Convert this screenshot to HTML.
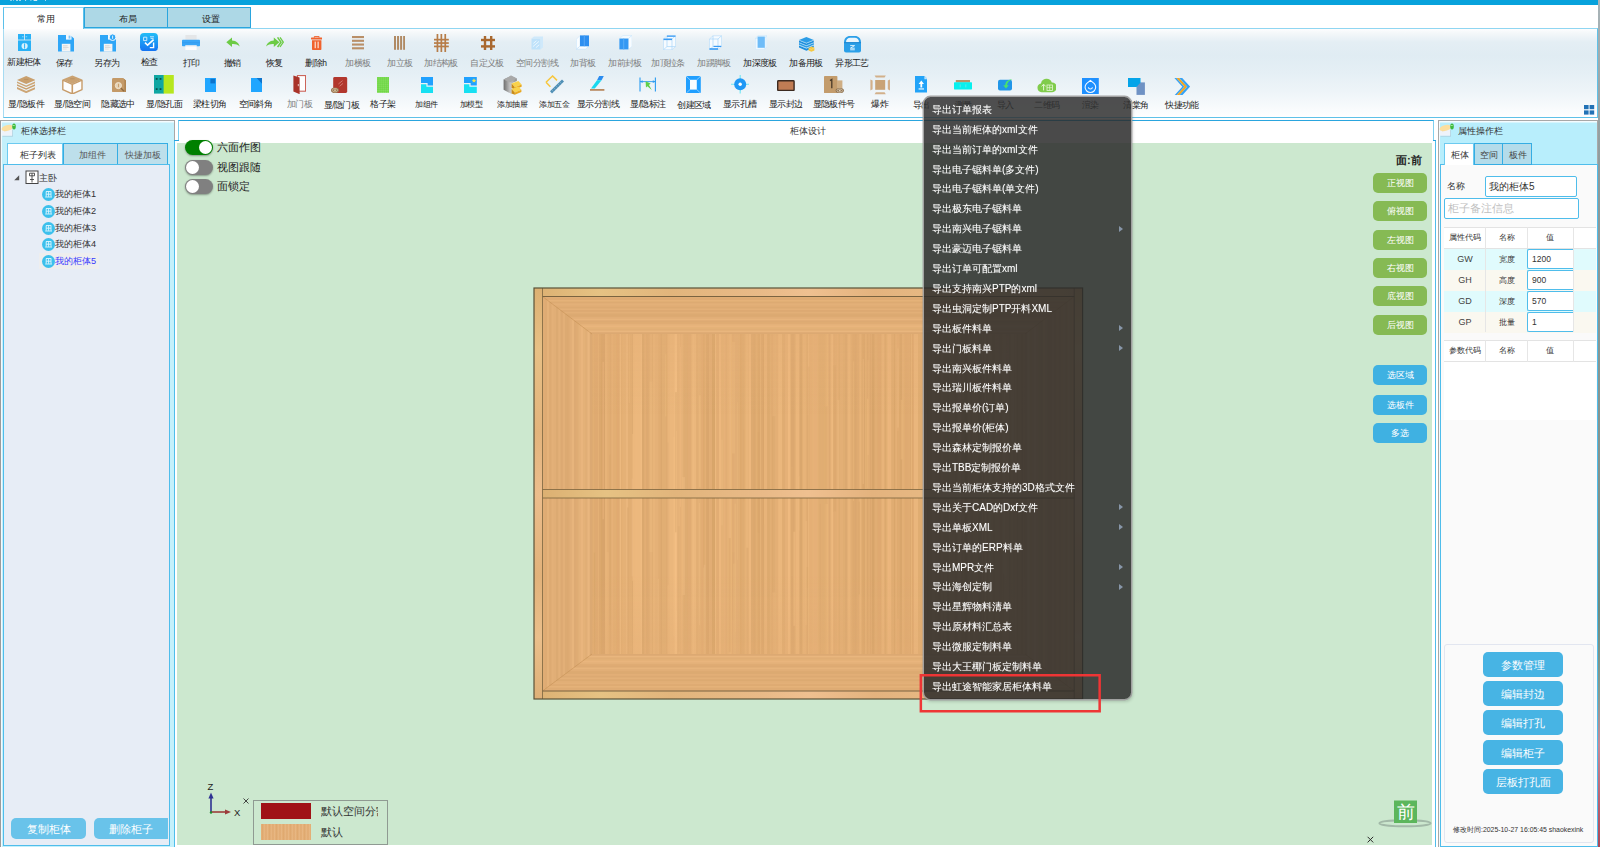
<!DOCTYPE html>
<html lang="zh">
<head>
<meta charset="utf-8">
<title>柜体设计</title>
<style>
*{box-sizing:border-box;margin:0;padding:0}
html,body{width:1600px;height:847px;overflow:hidden;background:#fff}
body{font-family:"Liberation Sans",sans-serif;font-size:9px;color:#222;position:relative}
.abs{position:absolute}
#titlebar{left:0;top:0;width:1600px;height:4.8px;background:#08a2dc}
#rightedge{left:1598.4px;top:0;width:1.6px;height:847px;background:linear-gradient(to bottom,#a9b4b8 0%,#8f9b9c 20%,#84948f 55%,#6f8b80 72%,#8a9a90 82%,#c58a98 88%,#b86070 95%,#a84858 100%)}
/* top tabs */
.ttab{position:absolute;top:7px;height:21px;text-align:center;line-height:22px;font-size:9px;color:#222}
.ttab.on{background:#fff;border:1px solid #8fd3f0;border-left-color:#5bc0ea;border-right-color:#5bc0ea;border-bottom:none;height:22.2px;z-index:3;padding-left:4px}
.ttab.off{background:#add8e6;border:1px solid #2aa5de;padding-left:3px}
#ribbon{left:3px;top:27.6px;width:1594.6px;height:90.2px;border:1px solid #5fc1e8;border-top-color:#8fd6f2;border-left-color:#a6dbf2;
 background:linear-gradient(to bottom,#fdfdfe 0%,#f5f8fa 4%,#e4eef4 15%,#e0ecf3 30%,#e5eff5 50%,#edf4f8 70%,#f7fafc 88%,#ffffff 100%)}
.tb{position:absolute;width:60px;text-align:center;font-size:8.5px;line-height:10px;color:#222;white-space:nowrap;letter-spacing:-0.55px}
.tb.g{color:#7d7d7d}
.tb.s{font-size:7.6px;letter-spacing:-0.5px;margin-top:1px}
.ic{position:absolute;width:24px;height:24px}
/* panels */

/* left panel */
#leftp{left:0;top:119.5px;width:174.5px;height:728px;background:#c4f0fb;border:1px solid #a8a8a8;border-left:1.5px solid #9c9c9c;border-bottom:none;box-shadow:inset 1px 1.5px 0 #f4fbfe}
#lp-title{left:21px;top:125px;font-size:9.2px;line-height:12px;color:#333}
.ltab{position:absolute;top:143px;height:22px;font-size:9px;line-height:22.5px;text-align:center;color:#444;white-space:nowrap}
.ltab.on{background:#fff;border:1px solid #6ccaf0;border-bottom:none;color:#333}
.ltab.off{background:#bddfeb;border:1px solid #35ade3;color:#555}
#lp-body{left:3px;top:164px;width:167px;height:682px;background:#e7edf6;border:1px solid #4fbdeb}
.tri{position:absolute;font-size:9px;line-height:12px;color:#333}
.tritem{position:absolute;left:55px;font-size:9.2px;line-height:12px;color:#333;white-space:nowrap}
.tcirc{position:absolute;left:41.5px;width:13px;height:13px;border-radius:50%;background:#3cc0ec}
.lbtn{position:absolute;top:818px;height:21px;background:#69c3ea;color:#fff;font-size:11px;line-height:22px;text-align:center;border-radius:5px}

/* center */
#centerp{left:178px;top:120px;width:1256px;height:21px;background:#fff;border:1px solid #2aa5de;border-left-color:#7fd0f0;border-right-color:#7fd0f0;border-bottom:none}
#centerp2{left:174px;top:140px;width:1262px;height:707px;background:#fff;border-left:1px solid #4fbdeb;border-right:1px solid #4fbdeb}
#cstep{left:174px;top:140px;width:5px;height:1px;background:#2aa5de}
#cstep2{left:1433px;top:140px;width:3px;height:1px;background:#2aa5de}
#ctitle{left:178px;top:125px;width:1260px;text-align:center;font-size:9px;line-height:12px;color:#333}
#canvas{left:177px;top:143px;width:1255px;height:702px;background:#cce8cf}
.tg{position:absolute;left:185px;width:28px;height:15px;border-radius:8px;box-shadow:0 1px 2px rgba(0,0,0,.35)}
.tg i{position:absolute;top:1px;width:13px;height:13px;border-radius:50%;background:#fff}
.tgl{position:absolute;left:217px;font-size:10.8px;line-height:14px;color:#222;white-space:nowrap}
.vb{position:absolute;left:1373px;width:54px;height:20px;border-radius:5px;color:#fff;font-size:8.5px;line-height:21px;text-align:center}
.vb.g{background:#86ba54}
.vb.b{background:#3fb1e2}
/* right panel */
#rightp{left:1438px;top:119.5px;width:159.5px;height:728px;background:#b8eefc;border:1px solid #a8a8a8;border-bottom:none;box-shadow:inset 1px 1.5px 0 #f4fbfe}
#rp-body{left:1440px;top:164px;width:157.5px;height:683px;background:#fafafa;border:1px solid #4fbdeb;border-bottom-width:1.5px}
#rp-title{left:1458px;top:125px;font-size:9.2px;line-height:12px;color:#333}
.rtab{position:absolute;top:143px;height:22px;width:29px;font-size:9px;line-height:22px;padding-left:1.5px;text-align:center;white-space:nowrap}
.rtab.on{background:#fff;border:1px solid #6ccaf0;border-bottom:none;color:#333}
.rtab.off{background:#b4dcea;border:1px solid #35ade3;color:#444}
.inp{position:absolute;background:#fff;border:1px solid #4fbdeb;border-radius:2px;font-size:10px;color:#333;white-space:nowrap;overflow:hidden}
.cell{position:absolute;font-size:8px;line-height:21px;text-align:center;color:#333;white-space:nowrap;height:21px}
.rbtn{position:absolute;left:1483px;width:80px;height:25px;border-radius:5px;background:#47b4e4;color:#fff;font-size:11px;line-height:26px;text-align:center}

/* menu */
#menu{left:924px;top:96.8px;width:206.6px;height:602.6px;border-radius:6.5px;background:rgba(42,42,42,.85);box-shadow:0 0 0 1.4px rgba(158,158,158,.95),1px 2px 3px 1px rgba(0,0,0,.15)}
#menu .hl{position:absolute;left:0;top:0;width:206.6px;height:22px;border-radius:6px 6px 0 0;background:rgba(255,255,255,.03)}
.mi{position:absolute;left:932px;height:20px;line-height:20px;font-size:10px;color:#fff;white-space:nowrap;text-shadow:0 0 1px rgba(255,255,255,.35)}
.ma{position:absolute;left:1119px;width:0;height:0;border-left:4px solid #8796a8;border-top:3.5px solid transparent;border-bottom:3.5px solid transparent}
#redbox{left:919.5px;top:674px;width:181.5px;height:38.5px;border:2.5px solid #ee3434}
</style>
</head>
<body>
<div id="titlebar" class="abs"></div>
<svg class="abs" style="left:8px;top:0" width="44" height="2" viewBox="0 0 44 2"><path d="M2.4 0h1.2v.9H2.4zM5 0h.7v.7H5zM8 0h2v.8H8zM11 0h2v.8h-2zM17.2 0h.9v1h-.9zM22.4 0h1v.8h-1zM25.6 0h3.6v.9h-3.6zM37 0h.8v1h-.8z" fill="#fff" opacity=".8"/></svg>
<div class="ttab on" style="left:3px;width:81px">常用</div>
<div class="ttab off" style="left:84px;width:84px">布局</div>
<div class="ttab off" style="left:167px;width:84px">设置</div>
<div id="ribbon" class="abs"></div>
<!--RIBSTART-->
<svg class="abs" style="left:17.5px;top:33.5px" width="13.2" height="17.8" viewBox="0 0 13.2 17.8"><rect x="0" y="0" width="6.2" height="5.6" fill="#29b1f6"/><rect x="7" y="0" width="6.2" height="5.6" fill="#29b1f6"/><rect x="0" y="6.4" width="13.2" height="11.4" fill="#29b1f6"/><circle cx="6.6" cy="12" r="3.1" fill="#d8f1fd"/><rect x="6.1" y="9.4" width="1" height="5.2" fill="#29b1f6"/><rect x="4" y="2.4" width="1.6" height="0.8" fill="#9edcfb"/><rect x="7.6" y="2.4" width="1.6" height="0.8" fill="#9edcfb"/></svg>
<div class="tb" style="left:-6px;top:57px">新建柜体</div>
<svg class="abs" style="left:58px;top:35px" width="16" height="16.6" viewBox="0 0 16 16.6"><path d="M0 0H12.2L16 3.6V16.6H0z" fill="#2ea6f7"/><rect x="8" y="0" width="5.5" height="4.6" fill="#f2f8fd"/><rect x="10.6" y="0.6" width="1.8" height="3" fill="#7cc6fa"/><rect x="3.8" y="8.8" width="8.6" height="7.8" fill="#f4f4f4"/><rect x="5" y="10.4" width="4.6" height="0.9" fill="#cfcfcf"/><rect x="5" y="12" width="5.6" height="0.9" fill="#d8d8d8"/><rect x="5" y="13.6" width="3.6" height="0.9" fill="#dedede"/></svg>
<div class="tb" style="left:34px;top:57.5px">保存</div>
<svg class="abs" style="left:100px;top:33px" width="16" height="18.6" viewBox="0 -2 16 18.6"><path d="M0 0H12.2L16 3.6V16.6H0z" fill="#2ea6f7"/><rect x="8" y="0" width="5.5" height="4.6" fill="#f2f8fd"/><rect x="10.6" y="0.6" width="1.8" height="3" fill="#7cc6fa"/><rect x="3.8" y="8.8" width="8.6" height="7.8" fill="#f4f4f4"/><rect x="5" y="10.4" width="4.6" height="0.9" fill="#cfcfcf"/><rect x="5" y="12" width="5.6" height="0.9" fill="#d8d8d8"/><rect x="5" y="13.6" width="3.6" height="0.9" fill="#dedede"/><circle cx="12.6" cy="2.2" r="3.3" fill="#2ea6f7" stroke="#f2f8fd" stroke-width="1"/><rect x="12.2" y="0.6" width="0.9" height="3.2" fill="#f2f8fd"/></svg>
<div class="tb" style="left:77px;top:57.5px">另存为</div>
<svg class="abs" style="left:140.3px;top:33.3px" width="18" height="18.2" viewBox="0 0 18 18.2"><defs><linearGradient id="gck" x1="0" y1="0" x2="0" y2="1"><stop offset="0" stop-color="#22bdf7"/><stop offset="1" stop-color="#1473f2"/></linearGradient></defs><rect x="0" y="0" width="18" height="18.2" rx="4" fill="url(#gck)"/><path d="M3.6 4.2h3.2v3.4H3.6z M10 3.8h4 M10.6 5.4h3" stroke="#d6efff" stroke-width=".9" fill="none"/><path d="M5 9.6l2.6 2.6 6-5.6" stroke="#fff" stroke-width="1.6" fill="none"/><path d="M13.6 9.6v5H9.8" stroke="#fff" stroke-width="1.4" fill="none"/></svg>
<div class="tb" style="left:119px;top:56.5px">检查</div>
<svg class="abs" style="left:182.3px;top:35px" width="18" height="15.4" viewBox="0 0 18 15.4"><rect x="3.4" y="0" width="11.2" height="5" fill="#e4e6e8"/><rect x="0" y="4.8" width="18" height="6.4" rx="0.8" fill="#3aa6f7"/><rect x="0" y="7.2" width="18" height="1" fill="#2a8de0" opacity=".35"/><rect x="3.4" y="10.4" width="11.2" height="5" fill="#fdfdfd"/><rect x="3.4" y="10.4" width="11.2" height="1" fill="#dfe6ee"/></svg>
<div class="tb" style="left:161px;top:57.5px">打印</div>
<svg class="abs" style="left:225.5px;top:37px" width="14" height="11" viewBox="0 0 14 11"><path d="M0.3 5.2L6 0.4V3.4C10.6 3.6 13 6.2 13.6 9.4C11.6 7.4 9.4 6.8 6 7V10z" fill="#6ccb45"/></svg>
<div class="tb" style="left:202px;top:57.5px">撤销</div>
<svg class="abs" style="left:266.3px;top:37px" width="17.6" height="11" viewBox="0 0 17.6 11"><path d="M13.4 5.2L7.8 0.4V3.4C3.6 3.6 0.8 6.2 0.2 9.4C2.2 7.4 4.6 6.8 7.8 7V10z" fill="#6ccb45"/><path d="M11.6 0.4L15 5.2L11.6 10" stroke="#6ccb45" stroke-width="1.5" fill="none"/><path d="M14 0.4L17.3 5.2L14 10" stroke="#6ccb45" stroke-width="1.3" fill="none"/></svg>
<div class="tb" style="left:244px;top:57.5px">恢复</div>
<svg class="abs" style="left:310.5px;top:36px" width="11.4" height="14" viewBox="0 0 11.4 14"><path d="M3.4 1.6V0.4H8V1.6" stroke="#f0622d" stroke-width="1" fill="none"/><rect x="0" y="1.6" width="11.4" height="1.8" rx=".6" fill="#f0622d"/><path d="M1 4.2H10.4V13.2a.8.8 0 0 1-.8.8H1.8a.8.8 0 0 1-.8-.8z" fill="#f0622d"/><rect x="3.6" y="5.6" width="1.3" height="6.6" fill="#fbd7c8"/><rect x="6.5" y="5.6" width="1.3" height="6.6" fill="#fbd7c8"/></svg>
<div class="tb" style="left:286px;top:57.5px">删除h</div>
<svg class="abs" style="left:352px;top:36.2px" width="12" height="13.4" viewBox="0 0 12 13.4"><rect x="0" y="0" width="12" height="2.1" fill="#b98f68"/><rect x="0" y="3.75" width="12" height="2.1" fill="#b98f68"/><rect x="0" y="7.5" width="12" height="2.1" fill="#b98f68"/><rect x="0" y="11.25" width="12" height="2.1" fill="#b98f68"/></svg>
<div class="tb g" style="left:328px;top:57.5px">加横板</div>
<svg class="abs" style="left:394px;top:35.8px" width="11.2" height="13.8" viewBox="0 0 11.2 13.8"><rect x="0" y="0" width="2" height="13.8" fill="#b08a64"/><rect x="3.05" y="0" width="2" height="13.8" fill="#b08a64"/><rect x="6.1" y="0" width="2" height="13.8" fill="#b08a64"/><rect x="9.15" y="0" width="2" height="13.8" fill="#b08a64"/></svg>
<div class="tb g" style="left:370px;top:57.5px">加立板</div>
<svg class="abs" style="left:434.3px;top:34px" width="14.8" height="18" viewBox="0 0 14.8 18"><rect x="2.6" y="0" width="1.7" height="18" fill="#b77d49"/><rect x="6.5" y="0" width="1.7" height="18" fill="#b77d49"/><rect x="10.4" y="0" width="1.7" height="18" fill="#b77d49"/><rect x="0" y="4.8" width="14.8" height="1.7" fill="#b77d49"/><rect x="0" y="8.2" width="14.8" height="1.7" fill="#b77d49"/><rect x="0" y="11.6" width="14.8" height="1.7" fill="#b77d49"/></svg>
<div class="tb g" style="left:411px;top:57.5px">加结构板</div>
<svg class="abs" style="left:480.6px;top:36px" width="14.2" height="14.4" viewBox="0 0 14.2 14.4"><rect x="2.8" y="0" width="2.4" height="14.4" fill="#a9682f"/><rect x="9" y="0" width="2.4" height="14.4" fill="#a9682f"/><rect x="0" y="2.8" width="14.2" height="2.4" fill="#a9682f"/><rect x="0" y="9.2" width="14.2" height="2.4" fill="#a9682f"/></svg>
<div class="tb g" style="left:457px;top:57.5px">自定义板</div>
<svg class="abs" style="left:531.4px;top:35.6px" width="12.4" height="14" viewBox="0 0 12.4 14"><path d="M0.5 2.6L3 0.5H12L9.4 2.6z M9.4 2.6L12 0.5V11.4L9.4 13.5z" fill="#cfe9fb"/><rect x="0.5" y="2.6" width="8.9" height="10.9" fill="#bfe2fa"/><path d="M2 10.6L8 5.4M2.4 7.4L5.4 4.8M5 11.6L8.2 8.8" stroke="#eaf6fe" stroke-width="1"/></svg>
<div class="tb g" style="left:507px;top:57.5px">空间分割线</div>
<svg class="abs" style="left:576.4px;top:35.2px" width="13.4" height="14.8" viewBox="0 0 13.4 14.8"><path d="M0.5 4.2L4 0.6V11.2L0.5 14.2z" fill="#fafdff" stroke="#cfe7fb" stroke-width=".6"/><path d="M0.5 14.2L4 11.2H13L9.4 14.2z" fill="#fafdff" stroke="#bfe0fa" stroke-width=".6"/><rect x="4" y="0.4" width="9" height="10.8" fill="#2e8ff0"/><rect x="7.8" y="0.4" width="1" height="10.8" fill="#56a6f5"/></svg>
<div class="tb g" style="left:553px;top:57.5px">加背板</div>
<svg class="abs" style="left:618.7px;top:35.2px" width="13.4" height="14.8" viewBox="0 0 13.4 14.8"><path d="M0.4 3.6L4 0.5H13L9.4 3.6z" fill="#f4fafe" stroke="#cfe7fb" stroke-width=".6"/><path d="M9.4 3.6L13 0.5V11.4L9.4 14.4z" fill="#f8fcff" stroke="#cfe7fb" stroke-width=".6"/><rect x="0.4" y="3.6" width="9" height="10.8" fill="#3398f3"/><rect x="4.2" y="3.6" width="1" height="10.8" fill="#5aaef7"/></svg>
<div class="tb g" style="left:595px;top:57.5px">加前封板</div>
<svg class="abs" style="left:662.8px;top:34.8px" width="13" height="15.2" viewBox="0 0 13 15.2"><path d="M0.5 4L4 0.8H12.5V11.6L9 14.7H0.5z" fill="#f6fbff" stroke="#bfe0fa" stroke-width=".7"/><path d="M0.5 4H9V14.7M9 4L12.5 0.8M4 0.8V11.6H12.5M4 11.6L0.5 14.7" stroke="#a8d6f9" stroke-width=".7" fill="none"/><rect x="0.5" y="3.6" width="8.5" height="1.5" fill="#3a9cf4"/><rect x="4" y="0.5" width="8.5" height="1.3" fill="#3a9cf4"/></svg>
<div class="tb g" style="left:638px;top:57.5px">加顶拉条</div>
<svg class="abs" style="left:708.8px;top:34.8px" width="13" height="15.2" viewBox="0 0 13 15.2"><path d="M0.5 4L4 0.8H12.5V11.6L9 14.7H0.5z" fill="#f6fbff" stroke="#bfe0fa" stroke-width=".7"/><path d="M0.5 4H9V14.7M9 4L12.5 0.8M4 0.8V11.6H12.5M4 11.6L0.5 14.7" stroke="#a8d6f9" stroke-width=".7" fill="none"/><rect x="0.5" y="13.2" width="8.5" height="1.6" fill="#3a9cf4"/><rect x="4.6" y="10.8" width="7.6" height="1.2" fill="#3a9cf4"/></svg>
<div class="tb g" style="left:684px;top:57.5px">加踢脚板</div>
<svg class="abs" style="left:754.8px;top:35px" width="12.6" height="15" viewBox="0 0 12.6 15"><path d="M0.5 3.4L3 0.6H12L9.6 3.4z M9.6 3.4L12 0.6V11.8L9.6 14.5z" fill="#e6f4fe" stroke="#cde7fb" stroke-width=".5"/><rect x="0.5" y="3.4" width="9.1" height="11.1" fill="#eef8ff" stroke="#cde7fb" stroke-width=".5"/><rect x="2.6" y="1.6" width="7.2" height="11.2" fill="#6ebcf8"/></svg>
<div class="tb" style="left:730px;top:57.5px">加深度板</div>
<svg class="abs" style="left:799.4px;top:37px" width="15.4" height="14.8" viewBox="0 0 15.4 14.8"><path d="M7.4 0L14.8 3L7.4 6L0 3z" fill="#2b9ce6"/><path d="M0 3.6L7.4 6.6L14.8 3.6V5.4L7.4 8.4L0 5.4z" fill="#1f8fdc"/><path d="M0 6L7.4 9L14.8 6V7.8L7.4 10.8L0 7.8z" fill="#2b9ce6"/><path d="M0 8.4L7.4 11.4L14.8 8.4V10.6L7.4 13.8L0 10.6z" fill="#1f8fdc"/><path d="M1 3.4L7.4 6L13.8 3.4M1 6L7.4 8.6 13.8 6M1 8.6L7.4 11.2 13.8 8.6" stroke="#8fd0f7" stroke-width=".5" fill="none"/><path d="M9.6 11.2L12.6 9.6L15.4 10.8V13.4L12.4 14.8L9.6 13.6z" fill="#f5c842"/><path d="M9.6 11.2L12.4 12.4L15.4 10.8" stroke="#fbe08a" stroke-width=".6" fill="none"/></svg>
<div class="tb" style="left:776px;top:57.5px">加备用板</div>
<svg class="abs" style="left:844.2px;top:36.2px" width="17" height="16.6" viewBox="0 0 17 16.6"><path d="M0 6.5C0 2.2 2.6 0 6 0H11C14.4 0 17 2.2 17 6.5V14.6a2 2 0 0 1-2 2H2a2 2 0 0 1-2-2z" fill="#2b9fe8"/><path d="M2 6.2C2 3.4 3.8 1.8 6.2 1.8H10.8C13.2 1.8 15 3.4 15 6.2z" fill="#e9f5fd"/><rect x="0" y="6.2" width="17" height="1" fill="#1c84cf"/><path d="M6.2 9.6H10.6L6.4 12.2H10.8 M6.2 13.8H10.8" stroke="#d9effc" stroke-width="1" fill="none"/></svg>
<div class="tb" style="left:822px;top:57.5px">异形工艺</div>
<svg class="abs" style="left:17px;top:75.8px" width="18.4" height="17.2" viewBox="0 0 18.4 17.2"><path d="M9.2 0L18.4 4L9.2 8L0 4z" fill="#c9a06e"/><path d="M0 5.4L9.2 9.4L18.4 5.4V7L9.2 11L0 7z" fill="#cda676"/><path d="M0 8.2L9.2 12.2L18.4 8.2V9.8L9.2 13.8L0 9.8z" fill="#c9a06e"/><path d="M0 11L9.2 15L18.4 11V13L9.2 17.2L0 13z" fill="#cda676"/><path d="M7 3.4h4.4" stroke="#b58c5c" stroke-width=".7"/></svg>
<div class="tb" style="left:-3.8px;top:99.3px">显/隐板件</div>
<svg class="abs" style="left:61.8px;top:74.8px" width="20.8" height="19.6" viewBox="0 0 20.8 19.6"><path d="M10.4 0.4L20.2 4.6L10.4 8.8L0.6 4.6z" fill="#caa272"/><path d="M0.8 5.2L10.4 9.4V19L0.8 14.6z" fill="#fdfdfd" stroke="#c79c6a" stroke-width="1.4" stroke-linejoin="round"/><path d="M20 5.2L10.4 9.4V19L20 14.6z" fill="#fdfdfd" stroke="#c79c6a" stroke-width="1.4" stroke-linejoin="round"/><path d="M8.2 3.8h4.4" stroke="#b58c5c" stroke-width=".7"/></svg>
<div class="tb" style="left:42.2px;top:99.3px">显/隐空间</div>
<svg class="abs" style="left:112px;top:77.6px" width="14.2" height="14.4" viewBox="0 0 14.2 14.4"><path d="M1.4 0H11L14.2 2.6V13a1.4 1.4 0 0 1-1.4 1.4H1.4A1.4 1.4 0 0 1 0 13V1.4A1.4 1.4 0 0 1 1.4 0z" fill="#c49a68"/><path d="M11 0L14.2 2.6V13.6L12.4 14.4V2.2z" fill="#b08552"/><circle cx="6.4" cy="7.6" r="3.1" fill="#e6d3b6" stroke="#f2e6d2" stroke-width=".9"/><rect x="6" y="5.8" width=".9" height="3.4" fill="#c49a68"/><path d="M8.8 10L12 13.2" stroke="#8f6a40" stroke-width="1.4"/></svg>
<div class="tb" style="left:88px;top:99.3px">隐藏选中</div>
<svg class="abs" style="left:154.2px;top:75px" width="19.8" height="18.6" viewBox="0 0 19.8 18.6"><rect x="0" y="0" width="10" height="18.6" fill="#0fa6a2"/><rect x="9.6" y="0" width="10.2" height="18.6" fill="#b6e71e"/><rect x="1.8" y="3" width="1.8" height="1.8" fill="#08504e"/><rect x="5.6" y="3" width="1.8" height="1.8" fill="#08504e"/><rect x="1.8" y="13.2" width="1.8" height="1.8" fill="#08504e"/><rect x="5.6" y="13.2" width="1.8" height="1.8" fill="#08504e"/></svg>
<div class="tb" style="left:134.2px;top:98.5px">显/隐孔面</div>
<svg class="abs" style="left:204.6px;top:77.6px" width="11" height="14.4" viewBox="0 0 11 14.4"><rect x="0" y="0" width="11" height="14.4" fill="#20a6ff"/><rect x="5.4" y="0.8" width="4.8" height="4.6" fill="#0d74cc"/></svg>
<div class="tb" style="left:179.8px;top:99.3px">梁柱切角</div>
<svg class="abs" style="left:250.6px;top:77.6px" width="11" height="14.4" viewBox="0 0 11 14.4"><rect x="0" y="0" width="11" height="14.4" fill="#20a6ff"/><path d="M5.6 0H11V5.8z" fill="#0d74cc"/></svg>
<div class="tb" style="left:225.5px;top:99.3px">空间斜角</div>
<svg class="abs" style="left:293px;top:74.8px" width="13.2" height="19.6" viewBox="0 0 13.2 19.6"><rect x="4.4" y="0.6" width="8.2" height="15.6" fill="#fdfdfd" stroke="#c8564a" stroke-width="1"/><path d="M0.4 0.4L6.6 2.6V19.2L0.4 16.4z" fill="#a93329"/><rect x="4.8" y="9" width="1" height="2.2" fill="#e8c8c4"/></svg>
<div class="tb g" style="left:269.5px;top:99.3px">加门板</div>
<svg class="abs" style="left:331.4px;top:76.8px" width="16.4" height="16.6" viewBox="0 0 16.4 16.6"><rect x="2.2" y="0" width="14" height="16" rx="1.4" fill="#b2372d"/><path d="M7.4 7L11.6 3.6M8.6 9.2L12 6.4" stroke="#d98880" stroke-width=".8"/><ellipse cx="4" cy="13.2" rx="4" ry="2.8" fill="#9a7752"/><ellipse cx="4" cy="13.2" rx="2.6" ry="1.7" fill="none" stroke="#d8c4a4" stroke-width=".7"/><circle cx="4" cy="13.2" r=".9" fill="#d8c4a4"/></svg>
<div class="tb" style="left:311.6px;top:99.8px">显/隐门板</div>
<svg class="abs" style="left:377px;top:77px" width="12.4" height="15.8" viewBox="0 0 12.4 15.8"><rect x="0" y="0" width="12.4" height="15.8" fill="#8be066"/><rect x="0.25" y="0.2" width="1.6" height="1.6" fill="#6fd645" transform="rotate(45 1.05 1)"/><rect x="0.25" y="2.15" width="1.6" height="1.6" fill="#6fd645" transform="rotate(45 1.05 2.95)"/><rect x="0.25" y="4.1" width="1.6" height="1.6" fill="#6fd645" transform="rotate(45 1.05 4.9)"/><rect x="0.25" y="6.05" width="1.6" height="1.6" fill="#6fd645" transform="rotate(45 1.05 6.85)"/><rect x="0.25" y="8" width="1.6" height="1.6" fill="#6fd645" transform="rotate(45 1.05 8.8)"/><rect x="0.25" y="9.95" width="1.6" height="1.6" fill="#6fd645" transform="rotate(45 1.05 10.75)"/><rect x="0.25" y="11.9" width="1.6" height="1.6" fill="#6fd645" transform="rotate(45 1.05 12.7)"/><rect x="0.25" y="13.85" width="1.6" height="1.6" fill="#6fd645" transform="rotate(45 1.05 14.65)"/><rect x="2.3" y="0.2" width="1.6" height="1.6" fill="#6fd645" transform="rotate(45 3.1 1)"/><rect x="2.3" y="2.15" width="1.6" height="1.6" fill="#6fd645" transform="rotate(45 3.1 2.95)"/><rect x="2.3" y="4.1" width="1.6" height="1.6" fill="#6fd645" transform="rotate(45 3.1 4.9)"/><rect x="2.3" y="6.05" width="1.6" height="1.6" fill="#6fd645" transform="rotate(45 3.1 6.85)"/><rect x="2.3" y="8" width="1.6" height="1.6" fill="#6fd645" transform="rotate(45 3.1 8.8)"/><rect x="2.3" y="9.95" width="1.6" height="1.6" fill="#6fd645" transform="rotate(45 3.1 10.75)"/><rect x="2.3" y="11.9" width="1.6" height="1.6" fill="#6fd645" transform="rotate(45 3.1 12.7)"/><rect x="2.3" y="13.85" width="1.6" height="1.6" fill="#6fd645" transform="rotate(45 3.1 14.65)"/><rect x="4.35" y="0.2" width="1.6" height="1.6" fill="#6fd645" transform="rotate(45 5.15 1)"/><rect x="4.35" y="2.15" width="1.6" height="1.6" fill="#6fd645" transform="rotate(45 5.15 2.95)"/><rect x="4.35" y="4.1" width="1.6" height="1.6" fill="#6fd645" transform="rotate(45 5.15 4.9)"/><rect x="4.35" y="6.05" width="1.6" height="1.6" fill="#6fd645" transform="rotate(45 5.15 6.85)"/><rect x="4.35" y="8" width="1.6" height="1.6" fill="#6fd645" transform="rotate(45 5.15 8.8)"/><rect x="4.35" y="9.95" width="1.6" height="1.6" fill="#6fd645" transform="rotate(45 5.15 10.75)"/><rect x="4.35" y="11.9" width="1.6" height="1.6" fill="#6fd645" transform="rotate(45 5.15 12.7)"/><rect x="4.35" y="13.85" width="1.6" height="1.6" fill="#6fd645" transform="rotate(45 5.15 14.65)"/><rect x="6.4" y="0.2" width="1.6" height="1.6" fill="#6fd645" transform="rotate(45 7.2 1)"/><rect x="6.4" y="2.15" width="1.6" height="1.6" fill="#6fd645" transform="rotate(45 7.2 2.95)"/><rect x="6.4" y="4.1" width="1.6" height="1.6" fill="#6fd645" transform="rotate(45 7.2 4.9)"/><rect x="6.4" y="6.05" width="1.6" height="1.6" fill="#6fd645" transform="rotate(45 7.2 6.85)"/><rect x="6.4" y="8" width="1.6" height="1.6" fill="#6fd645" transform="rotate(45 7.2 8.8)"/><rect x="6.4" y="9.95" width="1.6" height="1.6" fill="#6fd645" transform="rotate(45 7.2 10.75)"/><rect x="6.4" y="11.9" width="1.6" height="1.6" fill="#6fd645" transform="rotate(45 7.2 12.7)"/><rect x="6.4" y="13.85" width="1.6" height="1.6" fill="#6fd645" transform="rotate(45 7.2 14.65)"/><rect x="8.45" y="0.2" width="1.6" height="1.6" fill="#6fd645" transform="rotate(45 9.25 1)"/><rect x="8.45" y="2.15" width="1.6" height="1.6" fill="#6fd645" transform="rotate(45 9.25 2.95)"/><rect x="8.45" y="4.1" width="1.6" height="1.6" fill="#6fd645" transform="rotate(45 9.25 4.9)"/><rect x="8.45" y="6.05" width="1.6" height="1.6" fill="#6fd645" transform="rotate(45 9.25 6.85)"/><rect x="8.45" y="8" width="1.6" height="1.6" fill="#6fd645" transform="rotate(45 9.25 8.8)"/><rect x="8.45" y="9.95" width="1.6" height="1.6" fill="#6fd645" transform="rotate(45 9.25 10.75)"/><rect x="8.45" y="11.9" width="1.6" height="1.6" fill="#6fd645" transform="rotate(45 9.25 12.7)"/><rect x="8.45" y="13.85" width="1.6" height="1.6" fill="#6fd645" transform="rotate(45 9.25 14.65)"/><rect x="10.5" y="0.2" width="1.6" height="1.6" fill="#6fd645" transform="rotate(45 11.3 1)"/><rect x="10.5" y="2.15" width="1.6" height="1.6" fill="#6fd645" transform="rotate(45 11.3 2.95)"/><rect x="10.5" y="4.1" width="1.6" height="1.6" fill="#6fd645" transform="rotate(45 11.3 4.9)"/><rect x="10.5" y="6.05" width="1.6" height="1.6" fill="#6fd645" transform="rotate(45 11.3 6.85)"/><rect x="10.5" y="8" width="1.6" height="1.6" fill="#6fd645" transform="rotate(45 11.3 8.8)"/><rect x="10.5" y="9.95" width="1.6" height="1.6" fill="#6fd645" transform="rotate(45 11.3 10.75)"/><rect x="10.5" y="11.9" width="1.6" height="1.6" fill="#6fd645" transform="rotate(45 11.3 12.7)"/><rect x="10.5" y="13.85" width="1.6" height="1.6" fill="#6fd645" transform="rotate(45 11.3 14.65)"/></svg>
<div class="tb" style="left:353px;top:99.3px">格子架</div>
<svg class="abs" style="left:420.6px;top:77px" width="12.8" height="16" viewBox="0 0 12.8 16"><path d="M0 0H12.8V8.6H6.6V6H0z" fill="#20a1ff"/><path d="M0 7.2H5.4V9.8H12.8V16H0z" fill="#17e0f2"/></svg>
<div class="tb s" style="left:396.6px;top:99.3px">加组件</div>
<svg class="abs" style="left:464.2px;top:77px" width="12.8" height="16" viewBox="0 0 12.8 16"><path d="M0 0H12.8V8.6H6.6V6H0z" fill="#20a1ff"/><path d="M0 7.2H5.4V9.8H12.8V16H0z" fill="#17e0f2"/><path d="M10 1.2l.7 1.5 1.6.2-1.2 1.1.3 1.6-1.4-.8-1.4.8.3-1.6-1.2-1.1 1.6-.2z" fill="#f7e34a"/></svg>
<div class="tb s" style="left:441px;top:99.3px">加模型</div>
<svg class="abs" style="left:503px;top:74.8px" width="19" height="19.8" viewBox="0 0 19 19.8"><defs><linearGradient id="gdr" x1="0" x2="1" y1="0" y2="0"><stop offset="0" stop-color="#6e6e6e"/><stop offset=".5" stop-color="#c4c4c4"/><stop offset="1" stop-color="#8c8c8c"/></linearGradient></defs><path d="M0.6 4.6L8 0.6L13.8 3.4V6L8.6 8.2V19L0.6 14.8z" fill="url(#gdr)"/><path d="M0.6 4.6L8 0.6L13.8 3.4L7 7.4z" fill="#a9a9a9"/><path d="M8.6 8.4L15.4 6L18.6 9.4L11.8 12.2z" fill="#f9d24a"/><path d="M8.6 8.4L11.8 12.2V14.4L8.6 13z" fill="#c98a14"/><path d="M11.8 12.2L18.6 9.4V11.8L11.8 14.6z" fill="#e9a820"/><path d="M8.6 14L15.2 11.6L18.4 14.8L11.8 17.6z" fill="#f9d24a"/><path d="M11.8 17.6L18.4 14.8V17L11.8 19.8z" fill="#e9a820"/><path d="M8.6 14L11.8 17.6V19.8L8.6 18.6z" fill="#c98a14"/></svg>
<div class="tb s" style="left:482.4px;top:99.3px">添加抽屉</div>
<svg class="abs" style="left:544.8px;top:74.8px" width="19.2" height="19" viewBox="0 0 19.2 19"><path d="M1 7.2L7.6 1L12 5.4" stroke="#f7c63c" stroke-width="1.5" fill="none"/><path d="M1 7.2L5.4 11.8" stroke="#f7c63c" stroke-width="1.5" fill="none"/><path d="M5 16.2L17 4.4L19 6.6L7 18.4z" fill="#4f8fb5"/><path d="M7.4 15.4l1 1M9.4 13.4l1 1M11.4 11.4l1 1M13.4 9.4l1 1M15.4 7.4l1 1" stroke="#b9d6e6" stroke-width=".6"/></svg>
<div class="tb s" style="left:524px;top:99.3px">添加五金</div>
<svg class="abs" style="left:590.3px;top:76.4px" width="14.4" height="14.8" viewBox="0 0 14.4 14.8"><path d="M9.2 0H13.8L11.6 4.2H7z" fill="#2a8cf0"/><path d="M7 4.2H11.6L4.8 12.4L1 12.6z" fill="#17d8ee"/><rect x="0" y="13" width="14.4" height="1.8" fill="#b98a60"/></svg>
<div class="tb" style="left:568px;top:99.3px">显示分割线</div>
<svg class="abs" style="left:639.3px;top:76.8px" width="17.4" height="14.8" viewBox="0 0 17.4 14.8"><path d="M1 0.4V14.6M16.4 0.4V14.6" stroke="#2a9cf0" stroke-width="1.1"/><path d="M1 4.6H16.4" stroke="#2a9cf0" stroke-width=".9"/><path d="M1 4.6l2.6-1.3v2.6zM16.4 4.6l-2.6-1.3v2.6z" fill="#2a9cf0"/><path d="M6.6 4.2L11.6 6.6L10 8L12.8 13L8.4 9.2L7 10.6z" fill="#5fd04a"/></svg>
<div class="tb" style="left:618px;top:99.3px">显/隐标注</div>
<svg class="abs" style="left:686.4px;top:75.8px" width="14.8" height="17.4" viewBox="0 0 14.8 17.4"><rect x="0" y="0" width="14.8" height="17.4" rx="1.6" fill="#209fff"/><path d="M0.8 0.8L4 3.8M14 0.8L10.8 3.8M0.8 16.6L4 13.6M14 16.6L10.8 13.6" stroke="#9fd6ff" stroke-width=".8"/><rect x="4" y="3.8" width="6.8" height="9.8" fill="#fafdff"/></svg>
<div class="tb" style="left:664px;top:100.1px">创建区域</div>
<svg class="abs" style="left:730.6px;top:75.4px" width="18.4" height="18.4" viewBox="0 0 18.4 18.4"><path d="M9.2 0V18.4M0 9.2H18.4" stroke="#6fe6f2" stroke-width="1.1"/><circle cx="9.2" cy="9.2" r="6" fill="#1f98f5"/><circle cx="9.2" cy="9.2" r="1.7" fill="#fff"/></svg>
<div class="tb" style="left:709.7px;top:99.3px">显示孔槽</div>
<svg class="abs" style="left:777px;top:79.8px" width="17.8" height="11.2" viewBox="0 0 17.8 11.2"><rect x="0.7" y="0.7" width="16.4" height="9.8" rx=".8" fill="#c07c54" stroke="#3c2a20" stroke-width="1.4"/></svg>
<div class="tb" style="left:755.7px;top:99.3px">显示封边</div>
<svg class="abs" style="left:823.5px;top:75.8px" width="20.2" height="17.4" viewBox="0 0 20.2 17.4"><rect x="0" y="0" width="13.4" height="17.2" rx=".8" fill="#c39c6c"/><rect x="13" y="4.4" width="5.4" height="12.8" fill="#cfae84"/><path d="M6 4.6L7.8 3.4V12.2" stroke="#4a3a28" stroke-width="1.3" fill="none"/><ellipse cx="15.8" cy="14.6" rx="4.2" ry="2.6" fill="#8f7454"/><ellipse cx="15.8" cy="14.6" rx="2.8" ry="1.6" fill="none" stroke="#e4d4bc" stroke-width=".7"/><circle cx="15.8" cy="14.6" r=".9" fill="#e4d4bc"/></svg>
<div class="tb" style="left:803.7px;top:99.3px">显隐板件号</div>
<svg class="abs" style="left:869.6px;top:74.8px" width="20.4" height="19.8" viewBox="0 0 20.4 19.8"><rect x="5.2" y="5" width="10" height="9.8" fill="#c9a376"/><path d="M4.6 0.6H15.8L14.6 2.6H5.8z" fill="#d2b08a"/><path d="M4.6 19.2H15.8L14.6 17.2H5.8z" fill="#d2b08a"/><path d="M0.4 4.4L2.6 5.6V14.2L0.4 15.4z" fill="#d2b08a"/><path d="M20 4.4L17.8 5.6V14.2L20 15.4z" fill="#d2b08a"/></svg>
<div class="tb" style="left:849.8px;top:99.3px">爆炸</div>
<svg class="abs" style="left:914.8px;top:76.4px" width="12.6" height="16.6" viewBox="0 0 12.6 16.6"><path d="M0 0H9.4L12.6 3.2V16.6H0z" fill="#22a3f8"/><path d="M9.4 0L12.6 3.2H9.4z" fill="#bfe3fc"/><path d="M6.3 4.6L9 8H7.2V11.4H5.4V8H3.6z" fill="#fff"/><rect x="3.6" y="12.4" width="5.4" height="1.1" fill="#fff"/></svg>
<div class="tb" style="left:891px;top:100px">导出</div>
<svg class="abs" style="left:954.2px;top:79.8px" width="18" height="10" viewBox="0 0 18 10"><rect x="1.8" y="0" width="14.2" height="2.6" fill="#b8946a"/><rect x="0" y="2.2" width="18" height="7.2" rx=".6" fill="#08f0ee"/><path d="M6.2 4.4v3M11.8 4.4v3" stroke="#7fe0f2" stroke-width=".7"/></svg>
<div class="tb" style="left:933px;top:100px">测量</div>
<svg class="abs" style="left:998px;top:79px" width="14.6" height="11.6" viewBox="0 0 14.6 11.6"><rect x="0" y="0.8" width="14" height="10.8" rx="2" fill="#2196e8"/><path d="M14.2 0.4C10.2 0.2 7.4 2.4 7.2 6.2H5.2L8 9.6L10.8 6.2H9C9.2 3.6 11 1.6 14.2 0.4z" fill="#4be36a"/></svg>
<div class="tb" style="left:975px;top:100px">导入</div>
<svg class="abs" style="left:1036.8px;top:78.2px" width="19.4" height="14.4" viewBox="0 0 19.4 14.4"><path d="M4.6 14.2a4.4 4.4 0 0 1-.6-8.7A5.6 5.6 0 0 1 14.8 4.4a4.9 4.9 0 0 1 .4 9.8z" fill="#80cc4c"/><path d="M6.6 12.4V6.4M4.6 8.4L6.6 6.2L8.6 8.4" stroke="#e6f6d8" stroke-width="1" fill="none"/><rect x="10" y="7" width="5.4" height="5.4" fill="none" stroke="#e6f6d8" stroke-width=".8"/><path d="M12.7 7v5.4M10 9.7h5.4" stroke="#e6f6d8" stroke-width=".7"/></svg>
<div class="tb" style="left:1017px;top:100px">二维码</div>
<svg class="abs" style="left:1082.2px;top:77.9px" width="16.8" height="16.6" viewBox="0 0 16.8 16.6"><rect x="0" y="0" width="16.8" height="16.6" fill="#1e90ff"/><path d="M8.4 2.4L12.3 5.6A5.3 5.3 0 1 1 4.5 5.6z" fill="none" stroke="#f2f8ff" stroke-width="1.1" stroke-linejoin="round"/><path d="M6.3 9.4C6.9 11.5 9.9 11.5 10.5 9.4" stroke="#f2f8ff" stroke-width="1.1" fill="none"/></svg>
<div class="tb" style="left:1060px;top:100px">渲染</div>
<svg class="abs" style="left:1127.8px;top:77.8px" width="17" height="17" viewBox="0 0 17 17"><rect x="8.5" y="4.4" width="8.4" height="12.5" fill="#6f92c4"/><path d="M0 0H12.5V4.4L8.5 9H0z" fill="#04a4e9"/></svg>
<div class="tb" style="left:1106px;top:100px">清棠角</div>
<svg class="abs" style="left:1174px;top:77.6px" width="16.4" height="17.4" viewBox="0 0 16.4 17.4"><path d="M0.4 0H2.5L10.4 8.7L2.5 17.4H0.4L8.3 8.7z" fill="#35a2f5"/><path d="M2.5 0H5.3L13.2 8.7L5.3 17.4H2.5L10.4 8.7z" fill="#f4a51f"/><path d="M5.3 0H8.2L16.1 8.7L8.2 17.4H5.3L13.2 8.7z" fill="#35a2f5"/></svg>
<div class="tb" style="left:1152px;top:100px">快捷功能</div>
<svg class="abs" style="left:1584.2px;top:105.2px" width="10.4" height="10" viewBox="0 0 10.4 10"><rect x="0" y="0" width="4.6" height="4.2" fill="#2272b6"/><rect x="5.6" y="0" width="4.6" height="4.2" fill="#2272b6"/><rect x="0" y="5.4" width="4.6" height="4.2" fill="#2272b6"/><rect x="5.6" y="5.4" width="4.6" height="4.2" fill="#2272b6"/></svg>
<!--RIBEND-->
<div id="leftp" class="abs"></div>
<div id="lp-title" class="abs">柜体选择栏</div>
<svg class="abs" style="left:0px;top:121px" width="17" height="17" viewBox="0 0 17 17"><path d="M2.6 15.4H12.9V8.6H12.2V14.7H2.6z" fill="#a9c6d6"/><rect x="2" y="8.2" width="10.2" height="6.5" fill="#eef3fa"/><ellipse cx="7.3" cy="7" rx="5.9" ry="2.9" transform="rotate(-15 7.3 7)" fill="#fbdf9f"/><path d="M3.6 9.6l.9.9.7-.8.9.6.5-.9z" fill="#f8d993"/><ellipse cx="14" cy="5.4" rx="1.8" ry="3" fill="#3dba3d"/><ellipse cx="13.7" cy="4.5" rx="1.3" ry=".6" fill="#a9e8a0"/></svg>
<div class="ltab on" style="left:7px;width:56px;padding-left:5px">柜子列表</div>
<div class="ltab off" style="left:63px;width:55px;padding-left:3px">加组件</div>
<div class="ltab off" style="left:117px;width:51px">快捷加板</div>
<div id="lp-body" class="abs"></div>
<svg class="abs" style="left:13px;top:174px" width="8" height="8" viewBox="0 0 8 8"><path d="M6.2 1.2V6.2H1.2z" fill="#555"/></svg>
<svg class="abs" style="left:25px;top:170px" width="15" height="15" viewBox="0 0 15 15"><rect x="1" y="1" width="12" height="12.5" fill="#fff" stroke="#444" stroke-width="1"/><path d="M4.5 3.2h5v2.6h-5zM7 3.2v9.3M5 9.5h4" stroke="#444" stroke-width="0.9" fill="none"/></svg>
<div class="tritem" style="left:39px;top:172px">主卧</div>
<div class="tcirc" style="top:187.5px"><svg width="13" height="13" viewBox="0 0 13 13"><path d="M4 3.5h5.2M4.2 3.5v5.2M9 3.5v5.2M3.2 9h6.8M6.6 3.5v5.3M4.2 6.2h4.8" stroke="#dff6ff" stroke-width="0.9" fill="none"/></svg></div>
<div class="tritem" style="top:188px">我的柜体1</div>
<div class="tcirc" style="top:204.5px"><svg width="13" height="13" viewBox="0 0 13 13"><path d="M4 3.5h5.2M4.2 3.5v5.2M9 3.5v5.2M3.2 9h6.8M6.6 3.5v5.3M4.2 6.2h4.8" stroke="#dff6ff" stroke-width="0.9" fill="none"/></svg></div>
<div class="tritem" style="top:205px">我的柜体2</div>
<div class="tcirc" style="top:221.5px"><svg width="13" height="13" viewBox="0 0 13 13"><path d="M4 3.5h5.2M4.2 3.5v5.2M9 3.5v5.2M3.2 9h6.8M6.6 3.5v5.3M4.2 6.2h4.8" stroke="#dff6ff" stroke-width="0.9" fill="none"/></svg></div>
<div class="tritem" style="top:222px">我的柜体3</div>
<div class="tcirc" style="top:237.5px"><svg width="13" height="13" viewBox="0 0 13 13"><path d="M4 3.5h5.2M4.2 3.5v5.2M9 3.5v5.2M3.2 9h6.8M6.6 3.5v5.3M4.2 6.2h4.8" stroke="#dff6ff" stroke-width="0.9" fill="none"/></svg></div>
<div class="tritem" style="top:238px">我的柜体4</div>
<div class="abs" style="left:39px;top:253px;width:60px;height:16px;background:#eeeeee"></div>
<div class="tcirc" style="top:254.5px"><svg width="13" height="13" viewBox="0 0 13 13"><path d="M4 3.5h5.2M4.2 3.5v5.2M9 3.5v5.2M3.2 9h6.8M6.6 3.5v5.3M4.2 6.2h4.8" stroke="#dff6ff" stroke-width="0.9" fill="none"/></svg></div>
<div class="tritem" style="top:255px;color:#3838ff">我的柜体5</div>
<div class="lbtn" style="left:11px;width:75px">复制柜体</div>
<div class="lbtn" style="left:94px;width:74px;border-radius:5px 0 0 5px">删除柜子</div>
<!--LEFT-->
<div id="centerp2" class="abs"></div>
<div id="centerp" class="abs"></div>
<div id="cstep" class="abs"></div>
<div id="cstep2" class="abs"></div>
<div id="ctitle" class="abs">柜体设计</div>
<div id="canvas" class="abs"></div>
<div class="tg" style="top:140px;background:#008000"><i style="left:14px"></i></div>
<div class="tg" style="top:159.5px;background:#808080"><i style="left:1px"></i></div>
<div class="tg" style="top:179px;background:#808080"><i style="left:1px"></i></div>
<div class="tgl" style="top:140px">六面作图</div>
<div class="tgl" style="top:160px">视图跟随</div>
<div class="tgl" style="top:179px">面锁定</div>
<div class="abs" style="left:1396px;top:153px;font-size:11px;line-height:14px;font-weight:bold;color:#222;white-space:nowrap">面:前</div>
<div class="vb g" style="top:173px">正视图</div>
<div class="vb g" style="top:201px">俯视图</div>
<div class="vb g" style="top:230px">左视图</div>
<div class="vb g" style="top:258px">右视图</div>
<div class="vb g" style="top:286px">底视图</div>
<div class="vb g" style="top:315px">后视图</div>
<div class="vb b" style="top:365px">选区域</div>
<div class="vb b" style="top:395px">选板件</div>
<div class="vb b" style="top:423px">多选</div>
<!--CABSTART-->
<svg class="abs" style="left:530px;top:284px" width="558" height="420" viewBox="530 284 558 420" shape-rendering="auto">
<defs>
<linearGradient id="eh" x1="0" x2="1" y1="0" y2="0"><stop offset="0" stop-color="#dcb072"/><stop offset=".12" stop-color="#e6c283"/><stop offset=".25" stop-color="#e2b57c"/><stop offset=".42" stop-color="#e9ba88"/><stop offset=".5" stop-color="#efc090"/><stop offset=".62" stop-color="#e4b37e"/><stop offset=".8" stop-color="#e8bc86"/><stop offset="1" stop-color="#deb077"/></linearGradient>
<linearGradient id="ev" x1="0" x2="0" y1="0" y2="1"><stop offset="0" stop-color="#dcb072"/><stop offset=".15" stop-color="#e8c085"/><stop offset=".35" stop-color="#e3b47c"/><stop offset=".5" stop-color="#ecbd8c"/><stop offset=".7" stop-color="#e2b27a"/><stop offset=".85" stop-color="#ebbf8b"/><stop offset="1" stop-color="#deb077"/></linearGradient>
<linearGradient id="fadeV" x1="0" x2="0" y1="0" y2="1"><stop offset="0" stop-color="#e3ad74" stop-opacity=".35"/><stop offset=".25" stop-color="#e3ad74" stop-opacity="0"/><stop offset=".75" stop-color="#e3ad74" stop-opacity="0"/><stop offset="1" stop-color="#e3ad74" stop-opacity=".3"/></linearGradient>
<clipPath id="bk"><rect x="592" y="334" width="433" height="320"/></clipPath>
<filter id="hb" x="0" y="0" width="1" height="1"><feGaussianBlur stdDeviation="0.7 0"/></filter>
</defs>
<rect x="534" y="288" width="548.6" height="411" fill="url(#eh)"/>
<rect x="534" y="288" width="8.5" height="411" fill="url(#ev)"/>
<rect x="1074.2" y="288" width="8.4" height="411" fill="url(#ev)"/>
<rect x="542.5" y="296.5" width="531.7" height="394.5" fill="#e0ad75"/>
<rect x="544.8" y="298.2" width="527.2" height="391.1" fill="#deab73"/>
<rect x="547.0" y="299.9" width="522.7" height="387.7" fill="#e5b279"/>
<rect x="549.2" y="301.6" width="518.2" height="384.3" fill="#ddaa72"/>
<rect x="551.5" y="303.3" width="513.8" height="381.0" fill="#e3b078"/>
<rect x="553.8" y="305.0" width="509.3" height="377.6" fill="#e1ae76"/>
<rect x="556.0" y="306.7" width="504.8" height="374.2" fill="#dcaa72"/>
<rect x="558.2" y="308.4" width="500.3" height="370.8" fill="#e3b078"/>
<rect x="560.5" y="310.1" width="495.8" height="367.4" fill="#dca972"/>
<rect x="562.8" y="311.8" width="491.3" height="364.0" fill="#e2af77"/>
<rect x="565.0" y="313.5" width="486.8" height="360.6" fill="#dcaa72"/>
<rect x="567.2" y="315.2" width="482.3" height="357.2" fill="#ddaa72"/>
<rect x="569.5" y="317.0" width="477.9" height="353.9" fill="#e1ae77"/>
<rect x="571.8" y="318.7" width="473.4" height="350.5" fill="#e7b47c"/>
<rect x="574.0" y="320.4" width="468.9" height="347.1" fill="#ddaa73"/>
<rect x="576.2" y="322.1" width="464.4" height="343.7" fill="#dfac74"/>
<rect x="578.5" y="323.8" width="459.9" height="340.3" fill="#e4b179"/>
<rect x="580.8" y="325.5" width="455.4" height="336.9" fill="#e9b57d"/>
<rect x="583.0" y="327.2" width="450.9" height="333.5" fill="#e4b178"/>
<rect x="585.2" y="328.9" width="446.5" height="330.2" fill="#e1ae76"/>
<rect x="587.5" y="330.6" width="442.0" height="326.8" fill="#e9b67e"/>
<rect x="589.8" y="332.3" width="437.5" height="323.4" fill="#dca972"/>
<rect x="592" y="334" width="433" height="320" fill="#e2ac72"/>
<g clip-path="url(#bk)"><g filter="url(#hb)"><rect x="592.0" y="334" width="1.3" height="320" fill="#e1ae73" opacity="1"/><rect x="593.0" y="334" width="1.3" height="320" fill="#e8b479" opacity="0.6"/><rect x="594.0" y="334" width="4.3" height="320" fill="#e1ae73" opacity="0.8"/><rect x="598.0" y="334" width="1.3" height="320" fill="#ebb77c" opacity="0.8"/><rect x="599.0" y="334" width="2.3" height="320" fill="#d9a66c" opacity="0.6"/><rect x="601.0" y="334" width="4.3" height="320" fill="#d5a268" opacity="0.8"/><rect x="605.0" y="334" width="2.8" height="320" fill="#efbb7f" opacity="1"/><rect x="607.5" y="334" width="2.3" height="320" fill="#e6b277" opacity="1"/><rect x="609.5" y="334" width="2.3" height="320" fill="#e1ae73" opacity="0.8"/><rect x="611.5" y="334" width="1.3" height="320" fill="#f3bf83" opacity="0.8"/><rect x="612.5" y="334" width="1.3" height="320" fill="#ebb77c" opacity="1"/><rect x="613.5" y="334" width="3.3" height="320" fill="#e6b277" opacity="1"/><rect x="616.5" y="334" width="2.8" height="320" fill="#e1ae73" opacity="0.6"/><rect x="619.0" y="334" width="1.3" height="320" fill="#e8b479" opacity="1"/><rect x="620.0" y="334" width="1.3" height="320" fill="#f7c387" opacity="1"/><rect x="621.0" y="334" width="1.3" height="320" fill="#e6b277" opacity="1"/><rect x="622.0" y="334" width="1.3" height="320" fill="#efbb7f" opacity="0.6"/><rect x="623.0" y="334" width="3.3" height="320" fill="#ebb77c" opacity="1"/><rect x="626.0" y="334" width="2.3" height="320" fill="#f3bf83" opacity="1"/><rect x="628.0" y="334" width="4.3" height="320" fill="#e6b277" opacity="1"/><rect x="632.0" y="334" width="1.3" height="320" fill="#d9a66c" opacity="1"/><rect x="633.0" y="334" width="2.8" height="320" fill="#f3bf83" opacity="0.6"/><rect x="635.5" y="334" width="1.3" height="320" fill="#f3bf83" opacity="1"/><rect x="636.5" y="334" width="4.3" height="320" fill="#efbb7f" opacity="1"/><rect x="640.5" y="334" width="1.8" height="320" fill="#f3bf83" opacity="1"/><rect x="642.0" y="334" width="2.3" height="320" fill="#d5a268" opacity="1"/><rect x="644.0" y="334" width="2.3" height="320" fill="#dca96e" opacity="0.6"/><rect x="646.0" y="334" width="2.8" height="320" fill="#d5a268" opacity="0.8"/><rect x="648.5" y="334" width="1.8" height="320" fill="#dca96e" opacity="0.8"/><rect x="650.0" y="334" width="2.3" height="320" fill="#e3b075" opacity="1"/><rect x="652.0" y="334" width="1.3" height="320" fill="#dca96e" opacity="1"/><rect x="653.0" y="334" width="2.3" height="320" fill="#e8b479" opacity="1"/><rect x="655.0" y="334" width="1.3" height="320" fill="#e3b075" opacity="1"/><rect x="656.0" y="334" width="2.3" height="320" fill="#e3b075" opacity="1"/><rect x="658.0" y="334" width="1.8" height="320" fill="#dca96e" opacity="0.6"/><rect x="659.5" y="334" width="1.3" height="320" fill="#dca96e" opacity="0.8"/><rect x="660.5" y="334" width="1.8" height="320" fill="#d5a268" opacity="1"/><rect x="662.0" y="334" width="4.3" height="320" fill="#dca96e" opacity="1"/><rect x="666.0" y="334" width="1.8" height="320" fill="#d5a268" opacity="0.8"/><rect x="667.5" y="334" width="2.3" height="320" fill="#e8b479" opacity="1"/><rect x="669.5" y="334" width="4.3" height="320" fill="#ebb77c" opacity="1"/><rect x="673.5" y="334" width="1.3" height="320" fill="#f3bf83" opacity="0.6"/><rect x="674.5" y="334" width="2.8" height="320" fill="#f7c387" opacity="1"/><rect x="677.0" y="334" width="2.3" height="320" fill="#e3b075" opacity="1"/><rect x="679.0" y="334" width="1.3" height="320" fill="#e6b277" opacity="1"/><rect x="680.0" y="334" width="1.3" height="320" fill="#dfac71" opacity="0.6"/><rect x="681.0" y="334" width="1.8" height="320" fill="#e6b277" opacity="0.8"/><rect x="682.5" y="334" width="1.3" height="320" fill="#e3b075" opacity="0.6"/><rect x="683.5" y="334" width="1.3" height="320" fill="#d5a268" opacity="0.8"/><rect x="684.5" y="334" width="3.3" height="320" fill="#d9a66c" opacity="1"/><rect x="687.5" y="334" width="4.3" height="320" fill="#d5a268" opacity="0.6"/><rect x="691.5" y="334" width="1.8" height="320" fill="#ebb77c" opacity="1"/><rect x="693.0" y="334" width="1.3" height="320" fill="#efbb7f" opacity="1"/><rect x="694.0" y="334" width="2.3" height="320" fill="#ebb77c" opacity="1"/><rect x="696.0" y="334" width="2.8" height="320" fill="#d9a66c" opacity="0.6"/><rect x="698.5" y="334" width="2.8" height="320" fill="#e6b277" opacity="1"/><rect x="701.0" y="334" width="2.8" height="320" fill="#e1ae73" opacity="0.6"/><rect x="703.5" y="334" width="1.3" height="320" fill="#d9a66c" opacity="1"/><rect x="704.5" y="334" width="1.8" height="320" fill="#e6b277" opacity="0.8"/><rect x="706.0" y="334" width="3.3" height="320" fill="#d5a268" opacity="0.8"/><rect x="709.0" y="334" width="3.3" height="320" fill="#e3b075" opacity="0.8"/><rect x="712.0" y="334" width="3.3" height="320" fill="#d5a268" opacity="1"/><rect x="715.0" y="334" width="1.3" height="320" fill="#f3bf83" opacity="1"/><rect x="716.0" y="334" width="3.3" height="320" fill="#e3b075" opacity="0.8"/><rect x="719.0" y="334" width="2.3" height="320" fill="#f7c387" opacity="0.8"/><rect x="721.0" y="334" width="3.3" height="320" fill="#e8b479" opacity="1"/><rect x="724.0" y="334" width="1.8" height="320" fill="#ebb77c" opacity="0.8"/><rect x="725.5" y="334" width="1.8" height="320" fill="#e3b075" opacity="0.8"/><rect x="727.0" y="334" width="1.8" height="320" fill="#e8b479" opacity="1"/><rect x="728.5" y="334" width="2.3" height="320" fill="#f3bf83" opacity="0.6"/><rect x="730.5" y="334" width="1.3" height="320" fill="#f7c387" opacity="1"/><rect x="731.5" y="334" width="2.8" height="320" fill="#e1ae73" opacity="0.8"/><rect x="734.0" y="334" width="4.3" height="320" fill="#e3b075" opacity="1"/><rect x="738.0" y="334" width="2.3" height="320" fill="#e3b075" opacity="0.6"/><rect x="740.0" y="334" width="1.8" height="320" fill="#d9a66c" opacity="0.8"/><rect x="741.5" y="334" width="2.8" height="320" fill="#dfac71" opacity="1"/><rect x="744.0" y="334" width="1.8" height="320" fill="#e6b277" opacity="0.6"/><rect x="745.5" y="334" width="2.8" height="320" fill="#efbb7f" opacity="1"/><rect x="748.0" y="334" width="1.3" height="320" fill="#efbb7f" opacity="0.6"/><rect x="749.0" y="334" width="2.3" height="320" fill="#f7c387" opacity="0.8"/><rect x="751.0" y="334" width="2.8" height="320" fill="#dca96e" opacity="1"/><rect x="753.5" y="334" width="2.3" height="320" fill="#d9a66c" opacity="1"/><rect x="755.5" y="334" width="2.8" height="320" fill="#e3b075" opacity="0.6"/><rect x="758.0" y="334" width="1.3" height="320" fill="#dca96e" opacity="0.8"/><rect x="759.0" y="334" width="1.3" height="320" fill="#dca96e" opacity="1"/><rect x="760.0" y="334" width="1.3" height="320" fill="#ebb77c" opacity="1"/><rect x="761.0" y="334" width="2.3" height="320" fill="#dca96e" opacity="0.8"/><rect x="763.0" y="334" width="1.3" height="320" fill="#d5a268" opacity="0.6"/><rect x="764.0" y="334" width="3.3" height="320" fill="#f3bf83" opacity="0.8"/><rect x="767.0" y="334" width="2.3" height="320" fill="#dfac71" opacity="0.8"/><rect x="769.0" y="334" width="1.3" height="320" fill="#e1ae73" opacity="0.8"/><rect x="770.0" y="334" width="1.8" height="320" fill="#e8b479" opacity="0.8"/><rect x="771.5" y="334" width="4.3" height="320" fill="#e3b075" opacity="1"/><rect x="775.5" y="334" width="3.3" height="320" fill="#e3b075" opacity="0.8"/><rect x="778.5" y="334" width="1.3" height="320" fill="#f3bf83" opacity="1"/><rect x="779.5" y="334" width="2.8" height="320" fill="#efbb7f" opacity="1"/><rect x="782.0" y="334" width="3.3" height="320" fill="#dca96e" opacity="0.8"/><rect x="785.0" y="334" width="3.3" height="320" fill="#e8b479" opacity="0.6"/><rect x="788.0" y="334" width="2.8" height="320" fill="#f7c387" opacity="0.8"/><rect x="790.5" y="334" width="4.3" height="320" fill="#d5a268" opacity="0.8"/><rect x="794.5" y="334" width="1.3" height="320" fill="#dca96e" opacity="1"/><rect x="795.5" y="334" width="4.3" height="320" fill="#f3bf83" opacity="0.6"/><rect x="799.5" y="334" width="3.3" height="320" fill="#d5a268" opacity="1"/><rect x="802.5" y="334" width="3.3" height="320" fill="#e8b479" opacity="1"/><rect x="805.5" y="334" width="1.3" height="320" fill="#e8b479" opacity="0.6"/><rect x="806.5" y="334" width="1.8" height="320" fill="#dfac71" opacity="1"/><rect x="808.0" y="334" width="1.3" height="320" fill="#f7c387" opacity="0.6"/><rect x="809.0" y="334" width="3.3" height="320" fill="#e6b277" opacity="0.6"/><rect x="812.0" y="334" width="1.3" height="320" fill="#e6b277" opacity="1"/><rect x="813.0" y="334" width="4.3" height="320" fill="#e8b479" opacity="0.8"/><rect x="817.0" y="334" width="1.8" height="320" fill="#e6b277" opacity="1"/><rect x="818.5" y="334" width="3.3" height="320" fill="#dfac71" opacity="1"/><rect x="821.5" y="334" width="3.3" height="320" fill="#dfac71" opacity="1"/><rect x="824.5" y="334" width="1.3" height="320" fill="#e3b075" opacity="0.6"/><rect x="825.5" y="334" width="2.3" height="320" fill="#e6b277" opacity="1"/><rect x="827.5" y="334" width="1.3" height="320" fill="#efbb7f" opacity="0.8"/><rect x="828.5" y="334" width="2.3" height="320" fill="#d9a66c" opacity="0.8"/><rect x="830.5" y="334" width="1.8" height="320" fill="#f7c387" opacity="0.6"/><rect x="832.0" y="334" width="1.3" height="320" fill="#f3bf83" opacity="1"/><rect x="833.0" y="334" width="1.3" height="320" fill="#e1ae73" opacity="0.8"/><rect x="834.0" y="334" width="2.8" height="320" fill="#dfac71" opacity="0.6"/><rect x="836.5" y="334" width="2.3" height="320" fill="#e6b277" opacity="0.8"/><rect x="838.5" y="334" width="1.8" height="320" fill="#dca96e" opacity="1"/><rect x="840.0" y="334" width="3.3" height="320" fill="#e3b075" opacity="1"/><rect x="843.0" y="334" width="2.3" height="320" fill="#dfac71" opacity="1"/><rect x="845.0" y="334" width="2.3" height="320" fill="#d9a66c" opacity="1"/><rect x="847.0" y="334" width="1.3" height="320" fill="#e3b075" opacity="1"/><rect x="848.0" y="334" width="2.8" height="320" fill="#f3bf83" opacity="0.6"/><rect x="850.5" y="334" width="2.3" height="320" fill="#e3b075" opacity="1"/><rect x="852.5" y="334" width="3.3" height="320" fill="#d9a66c" opacity="0.6"/><rect x="855.5" y="334" width="1.8" height="320" fill="#d9a66c" opacity="0.6"/><rect x="857.0" y="334" width="1.8" height="320" fill="#e1ae73" opacity="0.6"/><rect x="858.5" y="334" width="1.3" height="320" fill="#e1ae73" opacity="0.8"/><rect x="859.5" y="334" width="2.3" height="320" fill="#efbb7f" opacity="1"/><rect x="861.5" y="334" width="2.3" height="320" fill="#dca96e" opacity="1"/><rect x="863.5" y="334" width="2.3" height="320" fill="#d9a66c" opacity="1"/><rect x="865.5" y="334" width="1.3" height="320" fill="#f7c387" opacity="0.8"/><rect x="866.5" y="334" width="2.3" height="320" fill="#d9a66c" opacity="1"/><rect x="868.5" y="334" width="1.3" height="320" fill="#efbb7f" opacity="0.6"/><rect x="869.5" y="334" width="1.8" height="320" fill="#d9a66c" opacity="0.8"/><rect x="871.0" y="334" width="1.3" height="320" fill="#e1ae73" opacity="0.6"/><rect x="872.0" y="334" width="2.8" height="320" fill="#d5a268" opacity="1"/><rect x="874.5" y="334" width="3.3" height="320" fill="#e3b075" opacity="1"/><rect x="877.5" y="334" width="4.3" height="320" fill="#dca96e" opacity="0.6"/><rect x="881.5" y="334" width="3.3" height="320" fill="#f3bf83" opacity="0.8"/><rect x="884.5" y="334" width="1.3" height="320" fill="#dca96e" opacity="1"/><rect x="885.5" y="334" width="1.3" height="320" fill="#dca96e" opacity="0.8"/><rect x="886.5" y="334" width="1.8" height="320" fill="#efbb7f" opacity="1"/><rect x="888.0" y="334" width="3.3" height="320" fill="#f7c387" opacity="0.8"/><rect x="891.0" y="334" width="1.8" height="320" fill="#e6b277" opacity="0.8"/><rect x="892.5" y="334" width="1.8" height="320" fill="#e3b075" opacity="0.6"/><rect x="894.0" y="334" width="1.8" height="320" fill="#d5a268" opacity="0.6"/><rect x="895.5" y="334" width="1.3" height="320" fill="#f3bf83" opacity="0.8"/><rect x="896.5" y="334" width="3.3" height="320" fill="#e6b277" opacity="0.8"/><rect x="899.5" y="334" width="2.8" height="320" fill="#d9a66c" opacity="1"/><rect x="902.0" y="334" width="2.8" height="320" fill="#e8b479" opacity="1"/><rect x="904.5" y="334" width="3.3" height="320" fill="#e1ae73" opacity="0.8"/><rect x="907.5" y="334" width="1.8" height="320" fill="#e3b075" opacity="0.8"/><rect x="909.0" y="334" width="1.3" height="320" fill="#e3b075" opacity="1"/><rect x="910.0" y="334" width="1.3" height="320" fill="#dca96e" opacity="0.6"/><rect x="911.0" y="334" width="1.3" height="320" fill="#efbb7f" opacity="1"/><rect x="912.0" y="334" width="2.3" height="320" fill="#dca96e" opacity="0.6"/><rect x="914.0" y="334" width="1.3" height="320" fill="#efbb7f" opacity="1"/><rect x="915.0" y="334" width="3.3" height="320" fill="#efbb7f" opacity="1"/><rect x="918.0" y="334" width="4.3" height="320" fill="#dfac71" opacity="1"/><rect x="922.0" y="334" width="1.3" height="320" fill="#e6b277" opacity="0.8"/><rect x="923.0" y="334" width="1.3" height="320" fill="#e1ae73" opacity="1"/><rect x="924.0" y="334" width="1.3" height="320" fill="#e1ae73" opacity="1"/><rect x="925.0" y="334" width="2.3" height="320" fill="#e8b479" opacity="1"/><rect x="927.0" y="334" width="1.8" height="320" fill="#d5a268" opacity="1"/><rect x="928.5" y="334" width="1.8" height="320" fill="#e3b075" opacity="0.8"/><rect x="930.0" y="334" width="1.3" height="320" fill="#e3b075" opacity="1"/><rect x="931.0" y="334" width="1.3" height="320" fill="#e6b277" opacity="1"/><rect x="932.0" y="334" width="3.3" height="320" fill="#efbb7f" opacity="0.8"/><rect x="935.0" y="334" width="1.8" height="320" fill="#e8b479" opacity="0.6"/><rect x="936.5" y="334" width="1.3" height="320" fill="#e1ae73" opacity="0.6"/><rect x="937.5" y="334" width="1.3" height="320" fill="#e3b075" opacity="0.6"/><rect x="938.5" y="334" width="2.3" height="320" fill="#d5a268" opacity="1"/><rect x="940.5" y="334" width="1.8" height="320" fill="#efbb7f" opacity="0.8"/><rect x="942.0" y="334" width="1.3" height="320" fill="#ebb77c" opacity="0.8"/><rect x="943.0" y="334" width="4.3" height="320" fill="#e3b075" opacity="1"/><rect x="947.0" y="334" width="2.8" height="320" fill="#dca96e" opacity="1"/><rect x="949.5" y="334" width="4.3" height="320" fill="#efbb7f" opacity="0.8"/><rect x="953.5" y="334" width="1.3" height="320" fill="#f3bf83" opacity="1"/><rect x="954.5" y="334" width="3.3" height="320" fill="#dca96e" opacity="0.6"/><rect x="957.5" y="334" width="4.3" height="320" fill="#f7c387" opacity="0.8"/><rect x="961.5" y="334" width="1.3" height="320" fill="#d5a268" opacity="0.6"/><rect x="962.5" y="334" width="1.3" height="320" fill="#efbb7f" opacity="1"/><rect x="963.5" y="334" width="1.3" height="320" fill="#e3b075" opacity="1"/><rect x="964.5" y="334" width="3.3" height="320" fill="#d5a268" opacity="0.6"/><rect x="967.5" y="334" width="3.3" height="320" fill="#efbb7f" opacity="0.8"/><rect x="970.5" y="334" width="2.8" height="320" fill="#e1ae73" opacity="0.6"/><rect x="973.0" y="334" width="2.8" height="320" fill="#f7c387" opacity="0.6"/><rect x="975.5" y="334" width="3.3" height="320" fill="#e8b479" opacity="0.6"/><rect x="978.5" y="334" width="3.3" height="320" fill="#d9a66c" opacity="1"/><rect x="981.5" y="334" width="1.8" height="320" fill="#f7c387" opacity="0.6"/><rect x="983.0" y="334" width="1.8" height="320" fill="#dfac71" opacity="0.8"/><rect x="984.5" y="334" width="1.8" height="320" fill="#f3bf83" opacity="1"/><rect x="986.0" y="334" width="2.8" height="320" fill="#e3b075" opacity="0.6"/><rect x="988.5" y="334" width="2.8" height="320" fill="#efbb7f" opacity="1"/><rect x="991.0" y="334" width="1.3" height="320" fill="#ebb77c" opacity="0.8"/><rect x="992.0" y="334" width="1.3" height="320" fill="#ebb77c" opacity="0.8"/><rect x="993.0" y="334" width="2.3" height="320" fill="#e1ae73" opacity="1"/><rect x="995.0" y="334" width="4.3" height="320" fill="#ebb77c" opacity="0.8"/><rect x="999.0" y="334" width="1.3" height="320" fill="#e6b277" opacity="0.6"/><rect x="1000.0" y="334" width="2.8" height="320" fill="#e1ae73" opacity="0.6"/><rect x="1002.5" y="334" width="1.8" height="320" fill="#efbb7f" opacity="1"/><rect x="1004.0" y="334" width="1.8" height="320" fill="#f3bf83" opacity="1"/><rect x="1005.5" y="334" width="2.8" height="320" fill="#e6b277" opacity="1"/><rect x="1008.0" y="334" width="1.3" height="320" fill="#e8b479" opacity="0.8"/><rect x="1009.0" y="334" width="1.8" height="320" fill="#d9a66c" opacity="1"/><rect x="1010.5" y="334" width="1.3" height="320" fill="#e1ae73" opacity="1"/><rect x="1011.5" y="334" width="1.3" height="320" fill="#e8b479" opacity="1"/><rect x="1012.5" y="334" width="1.8" height="320" fill="#e3b075" opacity="0.8"/><rect x="1014.0" y="334" width="1.8" height="320" fill="#d9a66c" opacity="0.6"/><rect x="1015.5" y="334" width="1.3" height="320" fill="#f3bf83" opacity="1"/><rect x="1016.5" y="334" width="2.3" height="320" fill="#dca96e" opacity="1"/><rect x="1018.5" y="334" width="1.3" height="320" fill="#f3bf83" opacity="1"/><rect x="1019.5" y="334" width="1.8" height="320" fill="#e6b277" opacity="1"/><rect x="1021.0" y="334" width="2.3" height="320" fill="#d5a268" opacity="0.8"/><rect x="1023.0" y="334" width="1.3" height="320" fill="#e6b277" opacity="1"/><rect x="1024.0" y="334" width="2.3" height="320" fill="#e1ae73" opacity="0.8"/><rect x="772.2" y="416.2" width="3.0" height="176.0" fill="#d7a46a" opacity=".55"/><rect x="732.5" y="552.2" width="2.0" height="68.0" fill="#dba86d" opacity=".55"/><rect x="900.7" y="399.8" width="2.0" height="59.7" fill="#f1bd81" opacity=".55"/><rect x="1024.5" y="427.8" width="1.0" height="114.2" fill="#edb97e" opacity=".55"/><rect x="961.9" y="360.4" width="2.0" height="175.2" fill="#edb97e" opacity=".55"/><rect x="866.9" y="398.8" width="1.5" height="89.9" fill="#f5c185" opacity=".55"/><rect x="728.7" y="538.1" width="2.0" height="114.2" fill="#d7a46a" opacity=".55"/><rect x="943.6" y="571.5" width="3.0" height="191.1" fill="#f5c185" opacity=".55"/><rect x="680.1" y="346.9" width="1.0" height="159.9" fill="#f1bd81" opacity=".55"/><rect x="858.3" y="501.6" width="1.5" height="92.9" fill="#d7a46a" opacity=".55"/><rect x="986.9" y="378.4" width="1.5" height="112.2" fill="#edb97e" opacity=".55"/><rect x="720.9" y="439.6" width="2.0" height="85.8" fill="#f1bd81" opacity=".55"/><rect x="833.3" y="365.1" width="3.0" height="146.5" fill="#d7a46a" opacity=".55"/><rect x="682.0" y="477.1" width="3.0" height="117.9" fill="#edb97e" opacity=".55"/><rect x="1023.5" y="445.1" width="3.0" height="132.2" fill="#dba86d" opacity=".55"/><rect x="631.3" y="478.5" width="2.0" height="97.9" fill="#edb97e" opacity=".55"/><rect x="703.9" y="564.7" width="1.5" height="162.4" fill="#f1bd81" opacity=".55"/><rect x="757.8" y="432.0" width="1.5" height="100.7" fill="#d7a46a" opacity=".55"/><rect x="807.7" y="366.7" width="2.0" height="125.5" fill="#dba86d" opacity=".55"/><rect x="632.1" y="434.0" width="1.5" height="146.9" fill="#f1bd81" opacity=".55"/><rect x="1005.1" y="367.1" width="1.0" height="113.8" fill="#f1bd81" opacity=".55"/><rect x="1011.3" y="334.0" width="3.0" height="108.7" fill="#f5c185" opacity=".55"/><rect x="962.4" y="398.6" width="3.0" height="66.4" fill="#dba86d" opacity=".55"/><rect x="657.8" y="578.8" width="1.0" height="158.3" fill="#f1bd81" opacity=".55"/><rect x="628.8" y="334.4" width="1.0" height="68.8" fill="#f5c185" opacity=".55"/><rect x="990.3" y="584.2" width="2.0" height="144.0" fill="#f5c185" opacity=".55"/><rect x="867.5" y="359.9" width="1.0" height="95.1" fill="#f5c185" opacity=".55"/><rect x="675.0" y="392.1" width="2.0" height="140.2" fill="#d7a46a" opacity=".55"/><rect x="824.7" y="406.4" width="3.0" height="97.5" fill="#dba86d" opacity=".55"/><rect x="797.8" y="476.2" width="1.5" height="54.4" fill="#f1bd81" opacity=".55"/><rect x="897.1" y="348.4" width="2.0" height="79.1" fill="#f1bd81" opacity=".55"/><rect x="627.1" y="507.5" width="1.5" height="188.8" fill="#dba86d" opacity=".55"/><rect x="805.4" y="520.8" width="2.0" height="104.3" fill="#f1bd81" opacity=".55"/><rect x="677.8" y="526.2" width="2.0" height="125.7" fill="#dba86d" opacity=".55"/><rect x="806.6" y="415.0" width="1.5" height="173.0" fill="#dba86d" opacity=".55"/><rect x="793.4" y="531.7" width="2.0" height="94.2" fill="#f5c185" opacity=".55"/><rect x="806.7" y="567.1" width="1.5" height="122.8" fill="#d7a46a" opacity=".55"/><rect x="1002.8" y="573.7" width="1.5" height="58.2" fill="#d7a46a" opacity=".55"/><rect x="1013.8" y="442.0" width="1.5" height="156.5" fill="#dba86d" opacity=".55"/><rect x="762.3" y="524.5" width="2.0" height="199.6" fill="#dba86d" opacity=".55"/><rect x="734.6" y="503.6" width="1.5" height="128.7" fill="#f1bd81" opacity=".55"/><rect x="605.8" y="552.2" width="3.0" height="197.7" fill="#f1bd81" opacity=".55"/><rect x="665.3" y="354.3" width="1.0" height="62.1" fill="#f1bd81" opacity=".55"/><rect x="1005.7" y="479.9" width="1.0" height="163.8" fill="#f1bd81" opacity=".55"/><rect x="746.4" y="547.7" width="2.0" height="114.9" fill="#d7a46a" opacity=".55"/><rect x="897.4" y="430.9" width="1.5" height="187.9" fill="#dba86d" opacity=".55"/><rect x="732.0" y="341.9" width="3.0" height="111.6" fill="#f1bd81" opacity=".55"/><rect x="609.6" y="454.7" width="1.0" height="170.5" fill="#d7a46a" opacity=".55"/><rect x="703.3" y="567.6" width="1.0" height="100.9" fill="#edb97e" opacity=".55"/><rect x="737.0" y="402.2" width="1.0" height="157.5" fill="#edb97e" opacity=".55"/><rect x="992.2" y="335.0" width="2.0" height="163.3" fill="#d7a46a" opacity=".55"/><rect x="602.5" y="361.9" width="1.5" height="157.3" fill="#f1bd81" opacity=".55"/><rect x="1005.0" y="539.3" width="3.0" height="187.0" fill="#f1bd81" opacity=".55"/><rect x="649.5" y="381.6" width="3.0" height="170.4" fill="#edb97e" opacity=".55"/><rect x="948.3" y="491.9" width="1.5" height="99.2" fill="#edb97e" opacity=".55"/><rect x="791.5" y="467.1" width="1.0" height="108.8" fill="#dba86d" opacity=".55"/><rect x="699.1" y="502.9" width="1.0" height="122.3" fill="#f5c185" opacity=".55"/><rect x="733.1" y="563.7" width="3.0" height="198.2" fill="#edb97e" opacity=".55"/><rect x="862.5" y="359.1" width="1.5" height="124.8" fill="#f1bd81" opacity=".55"/><rect x="667.0" y="442.4" width="1.5" height="143.0" fill="#dba86d" opacity=".55"/><rect x="915.9" y="536.7" width="1.0" height="94.1" fill="#edb97e" opacity=".55"/><rect x="837.5" y="400.1" width="2.0" height="89.1" fill="#f1bd81" opacity=".55"/><rect x="699.1" y="395.2" width="1.5" height="92.2" fill="#f5c185" opacity=".55"/><rect x="673.5" y="437.0" width="1.0" height="198.9" fill="#f5c185" opacity=".55"/><rect x="819.9" y="503.9" width="1.0" height="198.6" fill="#d7a46a" opacity=".55"/><rect x="593.9" y="552.5" width="1.5" height="187.2" fill="#d7a46a" opacity=".55"/><rect x="971.7" y="365.0" width="1.5" height="78.4" fill="#f5c185" opacity=".55"/><rect x="676.1" y="430.8" width="1.0" height="179.9" fill="#f1bd81" opacity=".55"/><rect x="853.1" y="361.5" width="1.0" height="139.4" fill="#f5c185" opacity=".55"/><rect x="743.4" y="429.9" width="1.0" height="71.2" fill="#dba86d" opacity=".55"/><rect x="592.0" y="334" width="40.0" height="320" fill="#daa76c" opacity=".35"/><rect x="632.0" y="334" width="29.6" height="320" fill="#e9b57a" opacity=".35"/><rect x="661.6" y="334" width="37.8" height="320" fill="#ecb87d" opacity=".35"/><rect x="699.3" y="334" width="14.3" height="320" fill="#e0ad72" opacity=".35"/><rect x="713.6" y="334" width="24.6" height="320" fill="#e0ad72" opacity=".35"/><rect x="738.3" y="334" width="18.8" height="320" fill="#e0ad72" opacity=".35"/><rect x="757.1" y="334" width="16.0" height="320" fill="#daa76c" opacity=".35"/><rect x="773.1" y="334" width="34.7" height="320" fill="#e6b277" opacity=".35"/><rect x="807.8" y="334" width="26.6" height="320" fill="#e3b075" opacity=".35"/><rect x="834.4" y="334" width="16.6" height="320" fill="#e3b075" opacity=".35"/><rect x="851.0" y="334" width="31.3" height="320" fill="#ddaa6f" opacity=".35"/><rect x="882.3" y="334" width="30.6" height="320" fill="#daa76c" opacity=".35"/><rect x="912.9" y="334" width="31.0" height="320" fill="#e3b075" opacity=".35"/><rect x="943.9" y="334" width="32.1" height="320" fill="#e3b075" opacity=".35"/><rect x="975.9" y="334" width="39.7" height="320" fill="#e9b57a" opacity=".35"/><rect x="1015.6" y="334" width="22.0" height="320" fill="#daa76c" opacity=".35"/></g></g>
<rect x="592" y="334" width="433" height="320" fill="url(#fadeV)"/>
<path d="M542.5 296.5L592 334" stroke="#c08c50" stroke-width=".7" opacity=".7"/>
<path d="M1074.2 296.5L1025 334" stroke="#c08c50" stroke-width=".7" opacity=".7"/>
<path d="M542.5 691L592 654" stroke="#c08c50" stroke-width=".7" opacity=".7"/>
<path d="M1074.2 691L1025 654" stroke="#c08c50" stroke-width=".7" opacity=".7"/>
<rect x="542.5" y="489.5" width="531.7" height="8.5" fill="url(#eh)"/>
<path d="M542.5 489.5H1074.2 M542.5 498H1074.2" stroke="#7a623c" stroke-width=".8"/>
<path d="M542.5 296.5H1074.2 M542.5 691H1074.2" stroke="#6e5a3a" stroke-width=".9"/>
<path d="M542.5 288V699 M1074.2 288V699" stroke="#7a6540" stroke-width=".8"/>
<rect x="534" y="288" width="548.6" height="411" fill="none" stroke="#5a5238" stroke-width="1.2"/>
</svg>
<!--CABEND-->
<svg class="abs" style="left:200px;top:778px" width="50" height="44" viewBox="0 0 50 44">
<text x="7.5" y="12" font-family="Liberation Sans" font-size="9.5" fill="#222">Z</text>
<path d="M11 34V19" stroke="#2e3192" stroke-width="1.6"/><path d="M11 14.5l2.6 6h-5.2z" fill="#2e3192"/>
<path d="M11 34H26" stroke="#9c3b3b" stroke-width="1.6"/><path d="M31 34l-6 -2.5v5z" fill="#9c3b3b"/>
<circle cx="11" cy="34.5" r="1.2" fill="#1e8e2e"/>
<text x="34" y="38" font-family="Liberation Sans" font-size="9.5" fill="#222">X</text>
<path d="M43.5 20.5l5 5M48.5 20.5l-5 5" stroke="#333" stroke-width="0.9"/>
</svg>
<div class="abs" style="left:253px;top:800px;width:135px;height:45px;border:1px solid #8f9a92;background:#cce8cf"></div>
<div class="abs" style="left:261px;top:803px;width:50px;height:16px;background:#a01216"></div>
<div class="abs" style="left:261px;top:824px;width:50px;height:16px;background:repeating-linear-gradient(90deg,#e6b27a 0,#dda66c 2px,#e9b985 3px,#e0a970 5px,#eabb88 7px)"></div>
<div class="abs" style="left:321px;top:804px;width:57px;overflow:hidden;font-size:11px;line-height:14px;color:#333;white-space:nowrap">默认空间分割线</div>
<div class="abs" style="left:321px;top:825px;font-size:11px;line-height:14px;color:#333;white-space:nowrap">默认</div>
<svg class="abs" style="left:1375px;top:798px" width="60" height="34" viewBox="0 0 60 34">
<ellipse cx="30" cy="25.3" rx="25.6" ry="3" fill="none" stroke="#a2b9a8" stroke-width="1.9"/>
<rect x="19" y="2.5" width="23" height="22.5" fill="#5cb65c"/>
</svg>
<div class="abs" style="left:1394px;top:801px;width:23px;height:22px;color:#fff;font-size:18px;line-height:22px;text-align:center">前</div>
<svg class="abs" style="left:1366px;top:835px" width="10" height="10" viewBox="0 0 10 10"><path d="M1.6 1.8l5.6 5.6M7.2 1.8l-5.6 5.6" stroke="#2a2a2a" stroke-width="1"/></svg>
<!--CANVAS-->
<div id="rightp" class="abs"></div>
<div id="rp-body" class="abs"></div>
<svg class="abs" style="left:1438px;top:121px" width="17" height="17" viewBox="0 0 17 17"><path d="M2.6 15.4H12.9V8.6H12.2V14.7H2.6z" fill="#a9c6d6"/><rect x="2" y="8.2" width="10.2" height="6.5" fill="#eef3fa"/><ellipse cx="7.3" cy="7" rx="5.9" ry="2.9" transform="rotate(-15 7.3 7)" fill="#fbdf9f"/><path d="M3.6 9.6l.9.9.7-.8.9.6.5-.9z" fill="#f8d993"/><ellipse cx="14" cy="5.4" rx="1.8" ry="3" fill="#3dba3d"/><ellipse cx="13.7" cy="4.5" rx="1.3" ry=".6" fill="#a9e8a0"/></svg>
<div id="rp-title" class="abs">属性操作栏</div>
<div class="rtab on" style="left:1444px;width:30px">柜体</div>
<div class="rtab off" style="left:1474px">空间</div>
<div class="rtab off" style="left:1502px;width:30px">板件</div>
<div class="abs" style="left:1447px;top:180px;font-size:8.5px;line-height:12px;color:#333">名称</div>
<div class="inp" style="left:1485px;top:176px;width:92px;height:21px;line-height:19px;padding-left:3px">我的柜体5</div>
<div class="inp" style="left:1444px;top:198px;width:135px;height:21px;line-height:19px;padding-left:3px;color:#c0c0c0;font-size:10.5px">柜子备注信息</div>
<div class="abs" style="left:1444px;top:227px;width:152px;height:22px;background:#fff;border-top:1px solid #e3e3e3;border-bottom:1px solid #e3e3e3"></div>
<div class="cell" style="left:1444px;top:227px;width:42px">属性代码</div>
<div class="cell" style="left:1486px;top:227px;width:41px">名称</div>
<div class="cell" style="left:1527px;top:227px;width:46px">值</div>
<div class="abs" style="left:1444px;top:248.6px;width:152px;height:21px;background:#e0fbfd"></div>
<div class="cell" style="left:1444px;top:248.6px;width:42px;font-size:9px;color:#444">GW</div>
<div class="cell" style="left:1486px;top:248.6px;width:41px">宽度</div>
<div class="inp" style="left:1527px;top:248.6px;width:46.5px;height:20.4px;line-height:18px;padding-left:4px;font-size:8.5px;border-right:none;border-radius:2px 0 0 2px">1200</div>
<div class="abs" style="left:1444px;top:269.6px;width:152px;height:21px;background:#faf8f0"></div>
<div class="cell" style="left:1444px;top:269.6px;width:42px;font-size:9px;color:#444">GH</div>
<div class="cell" style="left:1486px;top:269.6px;width:41px">高度</div>
<div class="inp" style="left:1527px;top:269.6px;width:46.5px;height:20.4px;line-height:18px;padding-left:4px;font-size:8.5px;border-right:none;border-radius:2px 0 0 2px">900</div>
<div class="abs" style="left:1444px;top:290.6px;width:152px;height:21px;background:#e0fbfd"></div>
<div class="cell" style="left:1444px;top:290.6px;width:42px;font-size:9px;color:#444">GD</div>
<div class="cell" style="left:1486px;top:290.6px;width:41px">深度</div>
<div class="inp" style="left:1527px;top:290.6px;width:46.5px;height:20.4px;line-height:18px;padding-left:4px;font-size:8.5px;border-right:none;border-radius:2px 0 0 2px">570</div>
<div class="abs" style="left:1444px;top:311.6px;width:152px;height:21px;background:#faf8f0"></div>
<div class="cell" style="left:1444px;top:311.6px;width:42px;font-size:9px;color:#444">GP</div>
<div class="cell" style="left:1486px;top:311.6px;width:41px">批量</div>
<div class="inp" style="left:1527px;top:311.6px;width:46.5px;height:20.4px;line-height:18px;padding-left:4px;font-size:8.5px;border-right:none;border-radius:2px 0 0 2px">1</div>
<div class="abs" style="left:1485px;top:227px;width:1px;height:105px;background:#e6e6e6"></div>
<div class="abs" style="left:1527px;top:227px;width:1px;height:21px;background:#e6e6e6"></div>
<div class="abs" style="left:1573px;top:227px;width:1px;height:105px;background:#e6e6e6"></div>
<div class="abs" style="left:1444px;top:340px;width:152px;height:22px;background:#fff;border-top:1px solid #e3e3e3;border-bottom:1px solid #e3e3e3"></div>
<div class="cell" style="left:1444px;top:340px;width:42px">参数代码</div>
<div class="cell" style="left:1486px;top:340px;width:41px">名称</div>
<div class="cell" style="left:1527px;top:340px;width:46px">值</div>
<div class="abs" style="left:1485px;top:340px;width:1px;height:22px;background:#e6e6e6"></div>
<div class="abs" style="left:1527px;top:340px;width:1px;height:22px;background:#e6e6e6"></div>
<div class="abs" style="left:1573px;top:340px;width:1px;height:22px;background:#e6e6e6"></div>
<div class="abs" style="left:1444px;top:362px;width:152px;height:58px;background:#fff"></div>
<div class="abs" style="left:1444px;top:644px;width:150px;height:199px;border:1px solid #e2e6f0;border-radius:3px"></div>
<div class="rbtn" style="top:652px">参数管理</div>
<div class="rbtn" style="top:681px">编辑封边</div>
<div class="rbtn" style="top:710px">编辑打孔</div>
<div class="rbtn" style="top:740px">编辑柜子</div>
<div class="rbtn" style="top:769px">层板打孔面</div>
<div class="abs" style="left:1453px;top:825px;font-size:6.9px;line-height:9px;color:#333;white-space:nowrap">修改时间:2025-10-27 16:05:45 shaokexink</div>
<!--RIGHT-->
<div id="menu" class="abs"><div class="hl"></div></div>
<div class="mi" style="top:99.8px">导出订单报表</div>
<div class="mi" style="top:119.7px">导出当前柜体的xml文件</div>
<div class="mi" style="top:139.6px">导出当前订单的xml文件</div>
<div class="mi" style="top:159.5px">导出电子锯料单(多文件)</div>
<div class="mi" style="top:179.4px">导出电子锯料单(单文件)</div>
<div class="mi" style="top:199.3px">导出极东电子锯料单</div>
<div class="mi" style="top:219.2px">导出南兴电子锯料单</div>
<div class="ma" style="top:225.7px"></div>
<div class="mi" style="top:239.1px">导出豪迈电子锯料单</div>
<div class="mi" style="top:259.0px">导出订单可配置xml</div>
<div class="mi" style="top:278.9px">导出支持南兴PTP的xml</div>
<div class="mi" style="top:298.8px">导出虫洞定制PTP开料XML</div>
<div class="mi" style="top:318.7px">导出板件料单</div>
<div class="ma" style="top:325.2px"></div>
<div class="mi" style="top:338.6px">导出门板料单</div>
<div class="ma" style="top:345.1px"></div>
<div class="mi" style="top:358.5px">导出南兴板件料单</div>
<div class="mi" style="top:378.4px">导出瑞川板件料单</div>
<div class="mi" style="top:398.3px">导出报单价(订单)</div>
<div class="mi" style="top:418.2px">导出报单价(柜体)</div>
<div class="mi" style="top:438.1px">导出森林定制报价单</div>
<div class="mi" style="top:458.0px">导出TBB定制报价单</div>
<div class="mi" style="top:477.9px">导出当前柜体支持的3D格式文件</div>
<div class="mi" style="top:497.8px">导出关于CAD的Dxf文件</div>
<div class="ma" style="top:504.3px"></div>
<div class="mi" style="top:517.7px">导出单板XML</div>
<div class="ma" style="top:524.2px"></div>
<div class="mi" style="top:537.6px">导出订单的ERP料单</div>
<div class="mi" style="top:557.5px">导出MPR文件</div>
<div class="ma" style="top:564.0px"></div>
<div class="mi" style="top:577.4px">导出海创定制</div>
<div class="ma" style="top:583.9px"></div>
<div class="mi" style="top:597.3px">导出星辉物料清单</div>
<div class="mi" style="top:617.2px">导出原材料汇总表</div>
<div class="mi" style="top:637.1px">导出微服定制料单</div>
<div class="mi" style="top:657.0px">导出大王椰门板定制料单</div>
<div class="mi" style="top:676.9px">导出虹途智能家居柜体料单</div>
<svg class="abs" style="left:915px;top:670px" width="192" height="48" viewBox="915 670 192 48"><rect x="920.85" y="675.25" width="178.8" height="36" fill="none" stroke="#ee3535" stroke-width="2.5"/></svg>
<!--MENU-->
<div id="rightedge" class="abs"></div>
</body>
</html>
